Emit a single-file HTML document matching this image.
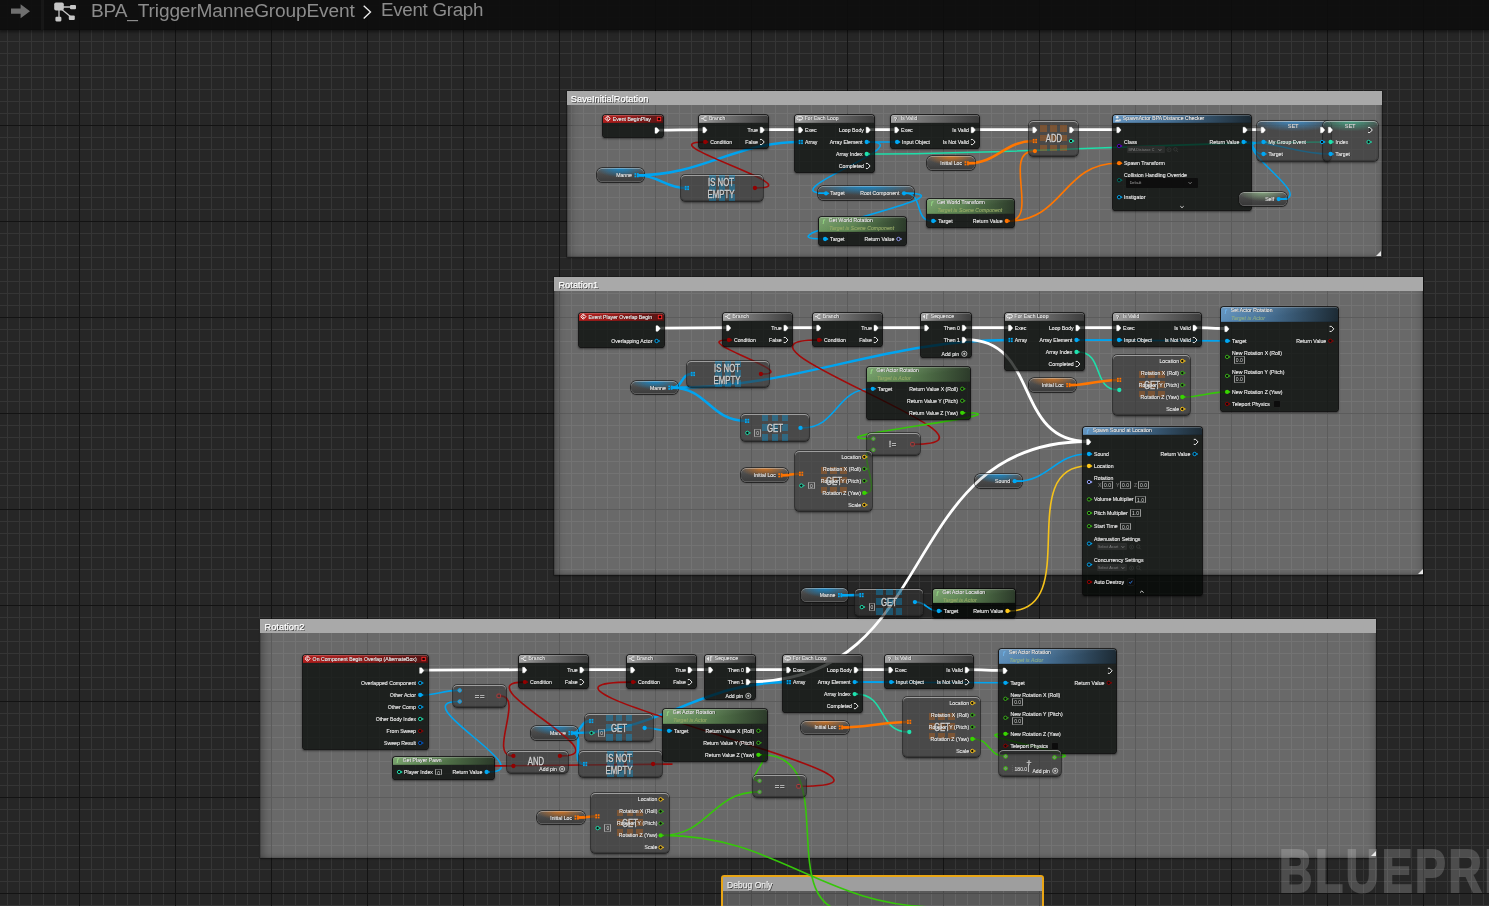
<!DOCTYPE html><html><head><meta charset="utf-8"><title>Event Graph</title><style>

html,body{margin:0;padding:0;background:#262626;}
body{width:1489px;height:906px;overflow:hidden;position:relative;font-family:"Liberation Sans",sans-serif;}
#g{will-change:transform;position:absolute;left:0;top:0;width:1489px;height:906px;overflow:hidden;background-color:#262626;
background-image:
linear-gradient(90deg,#131313 1px,transparent 1px),
linear-gradient(180deg,#131313 1px,transparent 1px),
linear-gradient(90deg,#353535 1px,transparent 1px),
linear-gradient(180deg,#353535 1px,transparent 1px);
background-size:96px 96px,96px 96px,12px 12px,12px 12px;
background-position:79px 0,0 29px,7px 0,0 5px;}
#g>*{position:absolute;}
.cm{box-sizing:border-box;background:rgba(255,255,255,.31);box-shadow:inset 0 0 0 .6px rgba(0,0,0,.25),inset 9px 0 8px -6px rgba(0,0,0,.3),inset -7px 0 7px -6px rgba(0,0,0,.2),inset 0 -5px 5px -4px rgba(0,0,0,.2),0 0 0 .7px rgba(0,0,0,.3),0 1px 2px rgba(0,0,0,.35);}
.cm i{position:absolute;right:.5px;bottom:1.3px;width:0;height:0;border-style:solid;border-width:0 0 5px 5px;border-color:transparent transparent #e4e4e4 transparent}
.cm .ct{position:absolute;left:0;right:0;top:0;height:13.8px;background:#a9a9a9;color:#fff;font-size:9.25px;line-height:16.4px;padding-left:4.1px;text-shadow:.8px .8px 0 rgba(0,0,0,.75);-webkit-text-stroke:.25px;letter-spacing:.03px;white-space:nowrap;overflow:hidden;}
.cm.sel{box-shadow:none;border:2.4px solid #e9a514;border-radius:3.2px;background:rgba(255,255,255,.24);}
.cm.sel .ct{height:14.1px;font-size:9.9px;line-height:15.2px;padding-left:0;color:#ececec;background:#9e9e9e}
.cm.sel .ct span{display:inline-block;transform-origin:0 50%;transform:scaleX(.865);margin-left:4.5px}
.n{box-sizing:border-box;background:rgba(2,5,3,.73);border-radius:2.6px;box-shadow:0 0 0 .8px rgba(5,5,5,.9),0 1.2px 2px .3px rgba(0,0,0,.45);}
.n .h{position:absolute;left:0;right:0;top:0;border-radius:2.6px 2.6px 0 0;box-shadow:inset 0 .7px 0 rgba(255,255,255,.28),inset 0 -0.6px 0 rgba(0,0,0,.25);}
.t{font-size:5.2px;line-height:6px;color:#ececec;white-space:nowrap;transform:translateY(-50%);text-shadow:.45px .45px 0 rgba(0,0,0,.9);-webkit-text-stroke:.14px;}
.ht{color:#ededed;}
.st{color:#94a866;text-shadow:none;font-size:5.1px;font-style:italic;letter-spacing:.08px}
.n+.t{}
.fi{font-style:italic;font-weight:bold;font-family:"Liberation Serif",serif;font-size:5.8px;color:#7fb7e6;text-shadow:none;-webkit-text-stroke:.1px}
.dim{color:#707070;text-shadow:none}
.dim2{color:#d4d4d4;font-size:5px;text-shadow:none}
.pl{box-sizing:border-box;border-radius:5.2px;background:radial-gradient(ellipse 52% 66% at 50% 0%,var(--g) 0%,transparent 100%),linear-gradient(180deg,rgba(92,92,92,.93) 0%,rgba(72,72,72,.93) 45%,rgba(56,56,56,.93) 100%);box-shadow:0 0 0 .8px rgba(20,20,20,.85),inset 0 .8px .3px rgba(235,235,235,.5),inset 0 -0.8px .4px rgba(160,160,160,.45),0 1px 1.5px rgba(0,0,0,.4);}
.cn{box-sizing:border-box;border-radius:4.3px;background:rgba(52,52,52,.6);box-shadow:0 0 0 .8px rgba(25,25,25,.75),inset 0 1px .3px rgba(215,215,215,.6),inset 0 -1px .8px rgba(20,20,20,.35),0 1.2px 2.2px rgba(0,0,0,.45);}
.sn{background:radial-gradient(ellipse 62% 10.5px at 50% 0%,var(--g) 0%,transparent 100%),rgba(52,52,52,.6);}
.setT{font-size:5.4px;color:#e9e9e9}
.big{color:#cfcfcf;text-align:center;text-shadow:.5px .5px 0 rgba(0,0,0,.35);-webkit-text-stroke:.36px;}
.wq{position:absolute}
.dd{box-sizing:border-box;border-radius:1px;overflow:hidden}
.dd span{position:absolute;top:50%;transform:translateY(-50%);font-size:3.7px;line-height:5px;white-space:nowrap}
.nb{box-sizing:border-box;border:.5px solid rgba(200,200,200,.7);border-top-color:rgba(200,200,200,.4);border-bottom-color:rgba(200,200,200,.4);color:#d6d6d6;font-size:5px;text-align:center;white-space:nowrap}
.cb{width:6px;height:6px;background:#0c0c0c;border-radius:.8px;box-shadow:0 0 0 .4px #222}
#wm{left:1278.6px;top:835.7px;font-size:62px;line-height:70px;font-weight:bold;color:#fff;opacity:.18;-webkit-text-stroke:2px #fff;white-space:nowrap;transform-origin:0 0;transform:scaleX(.743);letter-spacing:3.6px}
#top{left:0;top:0;width:1489px;height:29.5px;background:rgba(13,13,13,.92);box-shadow:0 1px 3px 1px rgba(0,0,0,.45);}
#top .bc{position:absolute;top:0;font-size:18.4px;line-height:24px;color:#8c8c8c;white-space:nowrap}
svg{overflow:visible}

</style></head><body><div id="g">
<div class="cm" style="left:566.7px;top:91.2px;width:814.9px;height:166px"><div class="ct">SaveInitialRotation</div><i></i></div>
<div class="cm" style="left:554.3px;top:276.7px;width:869.1px;height:298.6px"><div class="ct" style="height:14.3px">Rotation1</div><i></i></div>
<div class="cm" style="left:260.4px;top:619px;width:1115.8px;height:238.6px"><div class="ct">Rotation2</div><i></i></div>
<div class="cm sel" style="left:720.5px;top:874.6px;width:323.5px;height:55.4px"><div class="ct"><span>Debug Only</span></div></div>
<svg id="wires" width="1489" height="906" style="left:0;top:0" fill="none" stroke-linecap="round"><g id="wg"><path d="M638.1 175.2C703 175.2 734.7 142 799.6 142" stroke="#00a4f0" stroke-width="2.5"/>
<path d="M638.1 175.2C658.23 175.2 665.57 188 685.7 188" stroke="#00a4f0" stroke-width="2.5"/>
<path d="M756.3 188C814.17 188 646.13 142 704 142" stroke="#a30a0a" stroke-width="1.6"/>
<path d="M868.3 142C877.5 142 886.7 142 895.9 142" stroke="#00a4f0" stroke-width="1.6"/>
<path d="M868.3 142C922.95 142 770.15 193.3 824.8 193.3" stroke="#00a4f0" stroke-width="1.6"/>
<path d="M868.3 154C1026 154 1171.7 142 1329.4 142" stroke="#1edea9" stroke-width="1.6"/>
<path d="M968.2 163.25C997.42 163.25 1004.38 141 1033.6 141" stroke="#ff7600" stroke-width="2.5"/>
<path d="M1008.4 221C1040.17 221 1002.03 151.1 1033.8 151.1" stroke="#ff7600" stroke-width="1.6"/>
<path d="M1008.4 221C1064.17 221 1062.13 163.2 1117.9 163.2" stroke="#ff7600" stroke-width="1.6"/>
<path d="M905.6 193.3C982.92 193.3 746.58 239 823.9 239" stroke="#00a4f0" stroke-width="1.6"/>
<path d="M905.6 193.3C923.63 193.3 913.97 221 932 221" stroke="#00a4f0" stroke-width="1.6"/>
<path d="M1245.2 142C1254.9 142 1252.6 154 1262.3 154" stroke="#00a4f0" stroke-width="1.6"/>
<path d="M1245.2 142C1277.27 142 1297.33 154 1329.4 154" stroke="#00a4f0" stroke-width="1.6"/>
<path d="M1280.2 199.1C1320.68 199.1 1221.82 142 1262.3 142" stroke="#00a4f0" stroke-width="1.6"/>
<path d="M671.9 387.7C683.07 387.7 680.53 374 691.7 374" stroke="#00a4f0" stroke-width="2.5"/>
<path d="M671.9 387.7C707.6 387.7 710.1 420.9 745.8 420.9" stroke="#00a4f0" stroke-width="2.5"/>
<path d="M671.9 387.7C800.3 387.7 881 340 1009.4 340" stroke="#00a4f0" stroke-width="2.5"/>
<path d="M762.3 374C802.37 374 687.63 340 727.7 340" stroke="#a30a0a" stroke-width="1.6"/>
<path d="M801.9 427.9C838.17 427.9 835.33 388.8 871.6 388.8" stroke="#00a4f0" stroke-width="1.6"/>
<path d="M914.1 444.2C1030.4 444.2 701.5 340 817.8 340" stroke="#a30a0a" stroke-width="1.6"/>
<path d="M963.8 412.8C1037.88 412.8 798.02 438.7 872.1 438.7" stroke="#36c60a" stroke-width="1.6"/>
<path d="M865.9 492.9C882.33 492.9 855.67 449.8 872.1 449.8" stroke="#36c60a" stroke-width="1.6"/>
<path d="M781.9 475.3C788.37 475.3 793.33 473.8 799.8 473.8" stroke="#ff7600" stroke-width="2.5"/>
<path d="M1078.1 340C1091.33 340 1104.57 340 1117.8 340" stroke="#00a4f0" stroke-width="1.6"/>
<path d="M1078.1 340C1127.67 340 1176.33 340.9 1225.9 340.9" stroke="#00a4f0" stroke-width="1.6"/>
<path d="M1078.1 352C1104.1 352 1092.1 390 1118.1 390" stroke="#1edea9" stroke-width="1.6"/>
<path d="M1069.8 385.05C1087.52 385.05 1100.08 379.9 1117.8 379.9" stroke="#ff7600" stroke-width="2.5"/>
<path d="M1183.9 397C1199.6 397 1210.2 391.9 1225.9 391.9" stroke="#36c60a" stroke-width="1.6"/>
<path d="M1016.2 481.15C1049.12 481.15 1054.88 454 1087.8 454" stroke="#00a4f0" stroke-width="1.6"/>
<path d="M1009 611C1083.6 611 1013.2 466 1087.8 466" stroke="#f5c21b" stroke-width="1.6"/>
<path d="M841.6 595.15C847.82 595.15 853.98 595.1 860.2 595.1" stroke="#00a4f0" stroke-width="2.5"/>
<path d="M916.3 602.1C926.37 602.1 927.53 611 937.6 611" stroke="#00a4f0" stroke-width="1.6"/>
<path d="M421.8 695C435.53 695 444.67 690.4 458.4 690.4" stroke="#00a4f0" stroke-width="1.6"/>
<path d="M488.2 772C543.32 772 403.28 701.5 458.4 701.5" stroke="#00a4f0" stroke-width="1.6"/>
<path d="M500.4 695.9C524.33 695.9 488.27 755.9 512.2 755.9" stroke="#a30a0a" stroke-width="1.6"/>
<path d="M561.4 755.9C623.43 755.9 461.67 682.1 523.7 682.1" stroke="#a30a0a" stroke-width="1.6"/>
<path d="M654.5 764C750.37 764 416.33 766 512.2 766" stroke="#a30a0a" stroke-width="1.6"/>
<path d="M572 733.05C581.98 733.05 579.92 721 589.9 721" stroke="#00a4f0" stroke-width="2.5"/>
<path d="M572 733.05C586.28 733.05 569.62 764 583.9 764" stroke="#00a4f0" stroke-width="2.5"/>
<path d="M572 733.05C660.85 733.05 698.75 682.1 787.6 682.1" stroke="#00a4f0" stroke-width="2.5"/>
<path d="M646 728C654.2 728 659.6 730.8 667.8 730.8" stroke="#00a4f0" stroke-width="1.6"/>
<path d="M760 754.8C774.2 754.8 744 780.8 758.2 780.8" stroke="#36c60a" stroke-width="1.6"/>
<path d="M662.2 835.4C708.7 835.4 711.7 791.9 758.2 791.9" stroke="#36c60a" stroke-width="1.6"/>
<path d="M800.2 786.3C964.57 786.3 467.43 682.1 631.8 682.1" stroke="#a30a0a" stroke-width="1.6"/>
<path d="M578.2 817.5C584.57 817.5 589.73 816.3 596.1 816.3" stroke="#ff7600" stroke-width="2.5"/>
<path d="M856.3 682.1C867.5 682.1 878.7 682.1 889.9 682.1" stroke="#00a4f0" stroke-width="1.6"/>
<path d="M856.3 682.1C905.83 682.1 954.67 682.8 1004.2 682.8" stroke="#00a4f0" stroke-width="1.6"/>
<path d="M856.3 694.1C886.2 694.1 878.2 732 908.1 732" stroke="#1edea9" stroke-width="1.6"/>
<path d="M842.4 727.4C866.03 727.4 884.17 721.9 907.8 721.9" stroke="#ff7600" stroke-width="2.5"/>
<path d="M973.9 739C989.87 739 988.63 756.2 1004.6 756.2" stroke="#36c60a" stroke-width="1.6"/>
<path d="M1056 757.2C1102.23 757.2 957.97 733.8 1004.2 733.8" stroke="#36c60a" stroke-width="1.6"/>
<path d="M762.1 754.8C844.77 754.8 770.03 912.2 852.7 912.2" stroke="#36c60a" stroke-width="1.6"/>
<path d="M663 835.4C778.83 835.4 822.97 907.1 938.8 907.1" stroke="#36c60a" stroke-width="1.6"/>
<path d="M658.7 130.1C673.9 130.1 688.6 129.6 703.8 129.6" stroke="#fff" stroke-width="2.8"/>
<path d="M763.9 129.6C775.8 129.6 787.7 129.6 799.6 129.6" stroke="#fff" stroke-width="2.8"/>
<path d="M869.8 129.6C878.43 129.6 887.07 129.6 895.7 129.6" stroke="#fff" stroke-width="2.8"/>
<path d="M974.8 129.6C994.4 129.6 1014 129.6 1033.6 129.6" stroke="#fff" stroke-width="2.8"/>
<path d="M1073.2 129.6C1088.03 129.6 1102.87 129.6 1117.7 129.6" stroke="#fff" stroke-width="2.8"/>
<path d="M1246.7 129.6C1251.83 129.6 1256.97 129.6 1262.1 129.6" stroke="#fff" stroke-width="2.8"/>
<path d="M659.7 328.1C682.47 328.1 704.73 327.6 727.5 327.6" stroke="#fff" stroke-width="2.8"/>
<path d="M787.6 327.6C797.6 327.6 807.6 327.6 817.6 327.6" stroke="#fff" stroke-width="2.8"/>
<path d="M877.7 327.6C893.67 327.6 909.63 327.6 925.6 327.6" stroke="#fff" stroke-width="2.8"/>
<path d="M965.9 327.6C980.4 327.6 994.9 327.6 1009.4 327.6" stroke="#fff" stroke-width="2.8"/>
<path d="M965.9 339.6C1040.43 339.6 1013.07 441.5 1087.6 441.5" stroke="#fff" stroke-width="2.8"/>
<path d="M1079.6 327.6C1092.27 327.6 1104.93 327.6 1117.6 327.6" stroke="#fff" stroke-width="2.8"/>
<path d="M1196.7 327.6C1206.67 327.6 1215.73 328.5 1225.7 328.5" stroke="#fff" stroke-width="2.8"/>
<path d="M423.3 670.2C456.87 670.2 489.93 669.7 523.5 669.7" stroke="#fff" stroke-width="2.8"/>
<path d="M583.6 669.7C599.6 669.7 615.6 669.7 631.6 669.7" stroke="#fff" stroke-width="2.8"/>
<path d="M691.7 669.7C697.67 669.7 703.63 669.7 709.6 669.7" stroke="#fff" stroke-width="2.8"/>
<path d="M749.9 669.7C762.47 669.7 775.03 669.7 787.6 669.7" stroke="#fff" stroke-width="2.8"/>
<path d="M749.9 681.7C942.53 681.7 894.97 441.5 1087.6 441.5" stroke="#fff" stroke-width="2.8"/>
<path d="M857.8 669.7C868.43 669.7 879.07 669.7 889.7 669.7" stroke="#fff" stroke-width="2.8"/>
<path d="M968.8 669.7C980.77 669.7 992.03 670.4 1004 670.4" stroke="#fff" stroke-width="2.8"/></g></svg>
<div class="n" style="left:603px;top:114.8px;width:60.2px;height:22.1px"><div class="h" style="height:8.3px;background:linear-gradient(90deg,#b3201f 0%,#9a1c1b 40%,#531514 100%)"></div></div>
<div class="t ht" style="top:119px;left:612.8px;">Event BeginPlay</div>
<div class="n" style="left:699.1px;top:114.8px;width:69.3px;height:33px"><div class="h" style="height:8.3px;background:linear-gradient(90deg,#a2a2a2 0%,#7a7a7a 30%,#3d3d3d 100%)"></div></div>
<div class="t ht" style="top:118.1px;left:708.9px;">Branch</div>
<div class="t " style="top:142px;left:710.2px;">Condition</div>
<div class="t " style="top:130px;right:731px;">True</div>
<div class="t " style="top:142px;right:731px;">False</div>
<div class="n" style="left:794.9px;top:114.8px;width:79.4px;height:57.1px"><div class="h" style="height:8.3px;background:linear-gradient(90deg,#a2a2a2 0%,#7a7a7a 30%,#3d3d3d 100%)"></div></div>
<div class="t ht" style="top:118.1px;left:804.7px;">For Each Loop</div>
<div class="t " style="top:130px;left:805px;">Exec</div>
<div class="t " style="top:142px;left:805px;">Array</div>
<div class="t " style="top:130px;right:625.1px;">Loop Body</div>
<div class="t " style="top:142px;right:626.5px;">Array Element</div>
<div class="t " style="top:154px;right:626.5px;">Array Index</div>
<div class="t " style="top:166px;right:625.1px;">Completed</div>
<div class="n" style="left:891px;top:114.8px;width:88.3px;height:33px"><div class="h" style="height:8.3px;background:linear-gradient(90deg,#a2a2a2 0%,#7a7a7a 30%,#3d3d3d 100%)"></div></div>
<div class="t ht" style="top:118.1px;left:900.8px;">Is Valid</div>
<div class="t ht" style="top:118.6px;left:894.1px;font-weight:bold;">?</div>
<div class="t " style="top:130px;left:901.1px;">Exec</div>
<div class="t " style="top:142px;left:902.1px;">Input Object</div>
<div class="t " style="top:130px;right:520.1px;">Is Valid</div>
<div class="t " style="top:142px;right:520.1px;">Is Not Valid</div>
<div class="cn" style="left:1028.9px;top:120.5px;width:49.2px;height:35.9px"></div>
<div class="wq" style="left:1040.45px;top:125px;width:6.5px;height:6.5px;background:#ff7300;opacity:0.27"></div><div class="wq" style="left:1040.45px;top:134.8px;width:6.5px;height:6.5px;background:#ff7300;opacity:0.27"></div><div class="wq" style="left:1040.45px;top:144.6px;width:6.5px;height:6.5px;background:#ff7300;opacity:0.27"></div><div class="wq" style="left:1050.25px;top:125px;width:6.5px;height:6.5px;background:#ff7300;opacity:0.27"></div><div class="wq" style="left:1050.25px;top:134.8px;width:6.5px;height:6.5px;background:#ff7300;opacity:0.27"></div><div class="wq" style="left:1050.25px;top:144.6px;width:6.5px;height:6.5px;background:#ff7300;opacity:0.27"></div><div class="wq" style="left:1060.05px;top:125px;width:6.5px;height:6.5px;background:#ff7300;opacity:0.27"></div><div class="wq" style="left:1060.05px;top:134.8px;width:6.5px;height:6.5px;background:#ff7300;opacity:0.27"></div><div class="wq" style="left:1060.05px;top:144.6px;width:6.5px;height:6.5px;background:#ff7300;opacity:0.27"></div>
<div class="t big" style="top:138.45px;left:1053.5px;transform:translate(-50%,-50%);font-size:10.8px;line-height:12px;transform:translate(-50%,-50%) scaleX(0.72);">ADD</div>
<div class="n" style="left:1113px;top:114.8px;width:138.2px;height:95.2px"><div class="h" style="height:8.3px;background:linear-gradient(172deg,rgba(255,255,255,.1) 0%,rgba(255,255,255,0) 55%),linear-gradient(100deg,#5a8dba 0%,#477196 40%,#1c2932 100%)"></div></div>
<div class="t ht" style="top:118.1px;left:1122.8px;">SpawnActor BPA Distance Checker</div>
<div class="t " style="top:142px;left:1124.1px;">Class</div>
<div class="dd" style="left:1127.2px;top:146.2px;width:37.5px;height:7.3px;background:#2b2d2c"><span style="left:1.2px;color:#828282">BPA Distance C</span></div>
<div class="t " style="top:163.2px;left:1124.1px;">Spawn Transform</div>
<div class="t " style="top:175px;left:1124.1px;">Collision Handling Override</div>
<div class="dd" style="left:1125.9px;top:178px;width:72px;height:9.6px;background:#0e0e0e"><span style="left:3.8px;color:#a4a4a4">Default</span></div>
<div class="t " style="top:197.2px;left:1124.1px;">Instigator</div>
<div class="t " style="top:142px;right:249.6px;">Return Value</div>
<div class="cn sn" style="left:1256.8px;top:120.5px;width:74px;height:40.1px;--g:rgba(60,160,235,.75)"></div>
<div class="t setT" style="top:126px;left:1293.3px;transform:translate(-50%,-50%);">SET</div>
<div class="cn sn" style="left:1322.8px;top:120.5px;width:55.5px;height:40.1px;--g:rgba(70,225,175,.6)"></div>
<div class="t setT" style="top:126px;left:1350.3px;transform:translate(-50%,-50%);">SET</div>
<div class="t " style="top:142px;left:1268.5px;">My Group Event</div>
<div class="t " style="top:154px;left:1268.5px;">Target</div>
<div class="t " style="top:142px;left:1335.6px;">Index</div>
<div class="t " style="top:154px;left:1335.6px;">Target</div>
<div class="pl" style="left:596.6px;top:168.3px;width:47.8px;height:13.6px;--g:rgba(0,150,235,.75)"></div>
<div class="t " style="top:175.2px;right:857px;">Manne</div>
<div class="pl" style="left:927px;top:156.3px;width:47.5px;height:13.7px;--g:rgba(255,125,10,.7)"></div>
<div class="t " style="top:163.25px;right:526.9px;">Initial Loc</div>
<div class="pl" style="left:1238.5px;top:192.3px;width:48px;height:13.4px;--g:rgba(160,215,150,.6)"></div>
<div class="t " style="top:199.1px;right:214.9px;">Self</div>
<div class="cn" style="left:680.8px;top:174.6px;width:82.5px;height:26.8px"></div>
<div class="wq" style="left:709px;top:175px;width:6.5px;height:6.05px;background:#00a8f4;opacity:0.33"></div><div class="wq" style="left:709px;top:184.35px;width:6.5px;height:6.5px;background:#00a8f4;opacity:0.33"></div><div class="wq" style="left:709px;top:194.15px;width:6.5px;height:6.5px;background:#00a8f4;opacity:0.33"></div><div class="wq" style="left:718.8px;top:175px;width:6.5px;height:6.05px;background:#00a8f4;opacity:0.33"></div><div class="wq" style="left:718.8px;top:184.35px;width:6.5px;height:6.5px;background:#00a8f4;opacity:0.33"></div><div class="wq" style="left:718.8px;top:194.15px;width:6.5px;height:6.5px;background:#00a8f4;opacity:0.33"></div><div class="wq" style="left:728.6px;top:175px;width:6.5px;height:6.05px;background:#00a8f4;opacity:0.33"></div><div class="wq" style="left:728.6px;top:184.35px;width:6.5px;height:6.5px;background:#00a8f4;opacity:0.33"></div><div class="wq" style="left:728.6px;top:194.15px;width:6.5px;height:6.5px;background:#00a8f4;opacity:0.33"></div>
<div class="t big" style="top:188px;left:720.85px;transform:translate(-50%,-50%);font-size:10.8px;line-height:12px;transform:translate(-50%,-50%) scaleX(0.72);">IS NOT<br>EMPTY</div>
<div class="pl" style="left:818.4px;top:186.4px;width:95.2px;height:14.1px;--g:rgba(0,150,235,.75)"></div>
<div class="t " style="top:193.3px;left:830.3px;">Target</div>
<div class="t " style="top:193.3px;right:589.6px;">Root Component</div>
<div class="n" style="left:819px;top:216.8px;width:87.1px;height:27.9px"><div class="h" style="height:14.8px;background:linear-gradient(172deg,rgba(255,255,255,.13) 0%,rgba(255,255,255,0) 55%),linear-gradient(100deg,#6c9760 0%,#5b8151 40%,#2b3929 100%)"></div></div>
<div class="t ht" style="top:220.1px;left:828.8px;">Get World Rotation</div>
<div class="t st" style="top:228.2px;left:829.3px;">Target is Scene Component</div>
<div class="t fi" style="top:220.6px;left:822.8px;color:#95d884;">f</div>
<div class="t " style="top:239px;left:830.1px;">Target</div>
<div class="t " style="top:239px;right:594.7px;">Return Value</div>
<div class="n" style="left:927.1px;top:198.9px;width:87.3px;height:27.9px"><div class="h" style="height:14.8px;background:linear-gradient(172deg,rgba(255,255,255,.13) 0%,rgba(255,255,255,0) 55%),linear-gradient(100deg,#6c9760 0%,#5b8151 40%,#2b3929 100%)"></div></div>
<div class="t ht" style="top:202.2px;left:936.9px;">Get World Transform</div>
<div class="t st" style="top:210.3px;left:937.4px;">Target is Scene Component</div>
<div class="t fi" style="top:202.7px;left:930.9px;color:#95d884;">f</div>
<div class="t " style="top:221px;left:938.2px;">Target</div>
<div class="t " style="top:221px;right:486.4px;">Return Value</div>
<div class="n" style="left:578.6px;top:312.8px;width:85.6px;height:34.4px"><div class="h" style="height:8.3px;background:linear-gradient(90deg,#b3201f 0%,#9a1c1b 40%,#531514 100%)"></div></div>
<div class="t ht" style="top:317px;left:588.4px;">Event Player Overlap Begin</div>
<div class="t " style="top:341px;right:836.6px;">Overlapping Actor</div>
<div class="n" style="left:722.8px;top:312.8px;width:69.3px;height:33px"><div class="h" style="height:8.3px;background:linear-gradient(90deg,#a2a2a2 0%,#7a7a7a 30%,#3d3d3d 100%)"></div></div>
<div class="t ht" style="top:316.1px;left:732.6px;">Branch</div>
<div class="t " style="top:340px;left:733.9px;">Condition</div>
<div class="t " style="top:328px;right:707.3px;">True</div>
<div class="t " style="top:340px;right:707.3px;">False</div>
<div class="n" style="left:812.9px;top:312.8px;width:69.3px;height:33px"><div class="h" style="height:8.3px;background:linear-gradient(90deg,#a2a2a2 0%,#7a7a7a 30%,#3d3d3d 100%)"></div></div>
<div class="t ht" style="top:316.1px;left:822.7px;">Branch</div>
<div class="t " style="top:340px;left:824px;">Condition</div>
<div class="t " style="top:328px;right:617.2px;">True</div>
<div class="t " style="top:340px;right:617.2px;">False</div>
<div class="n" style="left:920.9px;top:312.8px;width:50px;height:44.2px"><div class="h" style="height:8.3px;background:linear-gradient(90deg,#a2a2a2 0%,#7a7a7a 30%,#3d3d3d 100%)"></div></div>
<div class="t ht" style="top:316.1px;left:930.7px;">Sequence</div>
<div class="t " style="top:328px;right:529px;">Then 0</div>
<div class="t " style="top:340px;right:529px;">Then 1</div>
<div class="t " style="top:353.8px;right:529.9px;">Add pin</div>
<div class="n" style="left:1004.7px;top:312.8px;width:79.4px;height:57.1px"><div class="h" style="height:8.3px;background:linear-gradient(90deg,#a2a2a2 0%,#7a7a7a 30%,#3d3d3d 100%)"></div></div>
<div class="t ht" style="top:316.1px;left:1014.5px;">For Each Loop</div>
<div class="t " style="top:328px;left:1014.8px;">Exec</div>
<div class="t " style="top:340px;left:1014.8px;">Array</div>
<div class="t " style="top:328px;right:415.3px;">Loop Body</div>
<div class="t " style="top:340px;right:416.7px;">Array Element</div>
<div class="t " style="top:352px;right:416.7px;">Array Index</div>
<div class="t " style="top:364px;right:415.3px;">Completed</div>
<div class="n" style="left:1112.9px;top:312.8px;width:88.3px;height:33px"><div class="h" style="height:8.3px;background:linear-gradient(90deg,#a2a2a2 0%,#7a7a7a 30%,#3d3d3d 100%)"></div></div>
<div class="t ht" style="top:316.1px;left:1122.7px;">Is Valid</div>
<div class="t ht" style="top:316.6px;left:1116px;font-weight:bold;">?</div>
<div class="t " style="top:328px;left:1123px;">Exec</div>
<div class="t " style="top:340px;left:1124px;">Input Object</div>
<div class="t " style="top:328px;right:298.2px;">Is Valid</div>
<div class="t " style="top:340px;right:298.2px;">Is Not Valid</div>
<div class="n" style="left:1221px;top:306.9px;width:117px;height:104.1px"><div class="h" style="height:14.8px;background:linear-gradient(172deg,rgba(255,255,255,.1) 0%,rgba(255,255,255,0) 55%),linear-gradient(100deg,#5a8dba 0%,#477196 40%,#1c2932 100%)"></div></div>
<div class="t ht" style="top:310.2px;left:1230.8px;">Set Actor Rotation</div>
<div class="t st" style="top:318.3px;left:1231.3px;color:#8bab88;">Target is Actor</div>
<div class="t fi" style="top:310.7px;left:1224.8px;color:#6eb4ec;">f</div>
<div class="t " style="top:340.9px;left:1232.1px;">Target</div>
<div class="t " style="top:353px;left:1232.1px;">New Rotation X (Roll)</div>
<div class="nb" style="left:1233.9px;top:356.3px;width:10.9px;height:7.6px;line-height:7px;">0.0</div>
<div class="t " style="top:372px;left:1232.1px;">New Rotation Y (Pitch)</div>
<div class="nb" style="left:1233.9px;top:375.4px;width:10.9px;height:7.6px;line-height:7px;">0.0</div>
<div class="t " style="top:391.9px;left:1232.1px;">New Rotation Z (Yaw)</div>
<div class="t " style="top:403.9px;left:1232.1px;">Teleport Physics</div>
<div class="cb" style="left:1273.6px;top:400.9px"></div>
<div class="t " style="top:340.9px;right:162.8px;">Return Value</div>
<div class="cn" style="left:686.8px;top:360.6px;width:82.5px;height:26.8px"></div>
<div class="wq" style="left:715px;top:361px;width:6.5px;height:6.05px;background:#00a8f4;opacity:0.33"></div><div class="wq" style="left:715px;top:370.35px;width:6.5px;height:6.5px;background:#00a8f4;opacity:0.33"></div><div class="wq" style="left:715px;top:380.15px;width:6.5px;height:6.5px;background:#00a8f4;opacity:0.33"></div><div class="wq" style="left:724.8px;top:361px;width:6.5px;height:6.05px;background:#00a8f4;opacity:0.33"></div><div class="wq" style="left:724.8px;top:370.35px;width:6.5px;height:6.5px;background:#00a8f4;opacity:0.33"></div><div class="wq" style="left:724.8px;top:380.15px;width:6.5px;height:6.5px;background:#00a8f4;opacity:0.33"></div><div class="wq" style="left:734.6px;top:361px;width:6.5px;height:6.05px;background:#00a8f4;opacity:0.33"></div><div class="wq" style="left:734.6px;top:370.35px;width:6.5px;height:6.5px;background:#00a8f4;opacity:0.33"></div><div class="wq" style="left:734.6px;top:380.15px;width:6.5px;height:6.5px;background:#00a8f4;opacity:0.33"></div>
<div class="t big" style="top:374px;left:726.85px;transform:translate(-50%,-50%);font-size:10.8px;line-height:12px;transform:translate(-50%,-50%) scaleX(0.72);">IS NOT<br>EMPTY</div>
<div class="pl" style="left:630.5px;top:380.7px;width:47.7px;height:13.8px;--g:rgba(0,150,235,.75)"></div>
<div class="t " style="top:387.7px;right:823.2px;">Manne</div>
<div class="cn" style="left:740.8px;top:414.3px;width:68.3px;height:27.1px"></div>
<div class="wq" style="left:761.9px;top:414.7px;width:6.5px;height:6.2px;background:#00a8f4;opacity:0.33"></div><div class="wq" style="left:761.9px;top:424.2px;width:6.5px;height:6.5px;background:#00a8f4;opacity:0.33"></div><div class="wq" style="left:761.9px;top:434px;width:6.5px;height:6.5px;background:#00a8f4;opacity:0.33"></div><div class="wq" style="left:771.7px;top:414.7px;width:6.5px;height:6.2px;background:#00a8f4;opacity:0.33"></div><div class="wq" style="left:771.7px;top:424.2px;width:6.5px;height:6.5px;background:#00a8f4;opacity:0.33"></div><div class="wq" style="left:771.7px;top:434px;width:6.5px;height:6.5px;background:#00a8f4;opacity:0.33"></div><div class="wq" style="left:781.5px;top:414.7px;width:6.5px;height:6.2px;background:#00a8f4;opacity:0.33"></div><div class="wq" style="left:781.5px;top:424.2px;width:6.5px;height:6.5px;background:#00a8f4;opacity:0.33"></div><div class="wq" style="left:781.5px;top:434px;width:6.5px;height:6.5px;background:#00a8f4;opacity:0.33"></div>
<div class="t big" style="top:427.85px;left:774.95px;transform:translate(-50%,-50%);font-size:10.8px;line-height:12px;transform:translate(-50%,-50%) scaleX(0.72);">GET</div>
<div class="nb" style="left:754.2px;top:429.1px;width:6.8px;height:7.8px;line-height:7.2px;">0</div>
<div class="n" style="left:866.7px;top:367px;width:103.7px;height:52.1px"><div class="h" style="height:14.8px;background:linear-gradient(172deg,rgba(255,255,255,.13) 0%,rgba(255,255,255,0) 55%),linear-gradient(100deg,#6c9760 0%,#5b8151 40%,#2b3929 100%)"></div></div>
<div class="t ht" style="top:370.3px;left:876.5px;">Get Actor Rotation</div>
<div class="t st" style="top:378.4px;left:877px;">Target is Actor</div>
<div class="t fi" style="top:370.8px;left:870.5px;color:#95d884;">f</div>
<div class="t " style="top:388.8px;left:877.8px;">Target</div>
<div class="t " style="top:388.8px;right:531px;">Return Value X (Roll)</div>
<div class="t " style="top:400.8px;right:531px;">Return Value Y (Pitch)</div>
<div class="t " style="top:412.8px;right:531px;">Return Value Z (Yaw)</div>
<div class="pl" style="left:1028.9px;top:378.1px;width:47.2px;height:13.7px;--g:rgba(255,125,10,.7)"></div>
<div class="t " style="top:385.05px;right:425.3px;">Initial Loc</div>
<div class="cn" style="left:1112.9px;top:354.6px;width:77.4px;height:60.1px"></div>
<div class="wq" style="left:1138.55px;top:371.2px;width:6.5px;height:6.5px;background:#ff7300;opacity:0.27"></div><div class="wq" style="left:1138.55px;top:381px;width:6.5px;height:6.5px;background:#ff7300;opacity:0.27"></div><div class="wq" style="left:1138.55px;top:390.8px;width:6.5px;height:6.5px;background:#ff7300;opacity:0.27"></div><div class="wq" style="left:1148.35px;top:371.2px;width:6.5px;height:6.5px;background:#ff7300;opacity:0.27"></div><div class="wq" style="left:1148.35px;top:381px;width:6.5px;height:6.5px;background:#ff7300;opacity:0.27"></div><div class="wq" style="left:1148.35px;top:390.8px;width:6.5px;height:6.5px;background:#ff7300;opacity:0.27"></div><div class="wq" style="left:1158.15px;top:371.2px;width:6.5px;height:6.5px;background:#ff7300;opacity:0.27"></div><div class="wq" style="left:1158.15px;top:381px;width:6.5px;height:6.5px;background:#ff7300;opacity:0.27"></div><div class="wq" style="left:1158.15px;top:390.8px;width:6.5px;height:6.5px;background:#ff7300;opacity:0.27"></div>
<div class="t big" style="top:384.65px;left:1151.6px;transform:translate(-50%,-50%);font-size:10.8px;line-height:12px;transform:translate(-50%,-50%) scaleX(0.72);">GET</div>
<div class="t " style="top:361px;right:309.9px;">Location</div>
<div class="t " style="top:373px;right:309.9px;">Rotation X (Roll)</div>
<div class="t " style="top:385px;right:309.9px;">Rotation Y (Pitch)</div>
<div class="t " style="top:397px;right:309.9px;">Rotation Z (Yaw)</div>
<div class="t " style="top:409px;right:309.9px;">Scale</div>
<div class="cn" style="left:866.7px;top:432.8px;width:53.4px;height:22.6px"></div>
<div class="t big" style="top:444.1px;left:893.4px;transform:translate(-50%,-50%);font-size:8.5px;line-height:12px;transform:translate(-50%,-50%) scaleX(0.9);"><span style="letter-spacing:.9px">!=</span></div>
<div class="cn" style="left:794.9px;top:450.5px;width:77.4px;height:60.1px"></div>
<div class="wq" style="left:820.55px;top:467.1px;width:6.5px;height:6.5px;background:#ff7300;opacity:0.27"></div><div class="wq" style="left:820.55px;top:476.9px;width:6.5px;height:6.5px;background:#ff7300;opacity:0.27"></div><div class="wq" style="left:820.55px;top:486.7px;width:6.5px;height:6.5px;background:#ff7300;opacity:0.27"></div><div class="wq" style="left:830.35px;top:467.1px;width:6.5px;height:6.5px;background:#ff7300;opacity:0.27"></div><div class="wq" style="left:830.35px;top:476.9px;width:6.5px;height:6.5px;background:#ff7300;opacity:0.27"></div><div class="wq" style="left:830.35px;top:486.7px;width:6.5px;height:6.5px;background:#ff7300;opacity:0.27"></div><div class="wq" style="left:840.15px;top:467.1px;width:6.5px;height:6.5px;background:#ff7300;opacity:0.27"></div><div class="wq" style="left:840.15px;top:476.9px;width:6.5px;height:6.5px;background:#ff7300;opacity:0.27"></div><div class="wq" style="left:840.15px;top:486.7px;width:6.5px;height:6.5px;background:#ff7300;opacity:0.27"></div>
<div class="t big" style="top:480.55px;left:833.6px;transform:translate(-50%,-50%);font-size:10.8px;line-height:12px;transform:translate(-50%,-50%) scaleX(0.72);">GET</div>
<div class="nb" style="left:808.1px;top:481.7px;width:6.8px;height:7.8px;line-height:7.2px;">0</div>
<div class="t " style="top:456.9px;right:627.9px;">Location</div>
<div class="t " style="top:468.9px;right:627.9px;">Rotation X (Roll)</div>
<div class="t " style="top:480.9px;right:627.9px;">Rotation Y (Pitch)</div>
<div class="t " style="top:492.9px;right:627.9px;">Rotation Z (Yaw)</div>
<div class="t " style="top:504.9px;right:627.9px;">Scale</div>
<div class="pl" style="left:740.8px;top:468.3px;width:47.4px;height:13.8px;--g:rgba(255,125,10,.7)"></div>
<div class="t " style="top:475.3px;right:713.2px;">Initial Loc</div>
<div class="pl" style="left:974.6px;top:474.2px;width:47.9px;height:13.7px;--g:rgba(0,150,235,.75)"></div>
<div class="t " style="top:481.15px;right:478.9px;">Sound</div>
<div class="n" style="left:1082.9px;top:426.8px;width:119.3px;height:168.3px"><div class="h" style="height:8.3px;background:linear-gradient(172deg,rgba(255,255,255,.1) 0%,rgba(255,255,255,0) 55%),linear-gradient(100deg,#5a8dba 0%,#477196 40%,#1c2932 100%)"></div></div>
<div class="t ht" style="top:430.1px;left:1092.7px;">Spawn Sound at Location</div>
<div class="t fi" style="top:430.6px;left:1086.7px;color:#6eb4ec;">f</div>
<div class="t " style="top:454px;left:1094px;">Sound</div>
<div class="t " style="top:466px;left:1094px;">Location</div>
<div class="t " style="top:478px;left:1094px;">Rotation</div>
<div class="t dim" style="top:485.2px;left:1097.9px;">X</div>
<div class="nb" style="left:1102.1px;top:481.3px;width:10.9px;height:7.6px;line-height:7px;">0.0</div>
<div class="t dim" style="top:485.2px;left:1115.9px;">Y</div>
<div class="nb" style="left:1120.1px;top:481.3px;width:10.9px;height:7.6px;line-height:7px;">0.0</div>
<div class="t dim" style="top:485.2px;left:1133.9px;">Z</div>
<div class="nb" style="left:1138.1px;top:481.3px;width:10.9px;height:7.6px;line-height:7px;">0.0</div>
<div class="t " style="top:499.4px;left:1094px;">Volume Multiplier</div>
<div class="nb" style="left:1135px;top:495.6px;width:10.9px;height:7.6px;line-height:7px;">1.0</div>
<div class="t " style="top:513px;left:1094px;">Pitch Multiplier</div>
<div class="nb" style="left:1130.1px;top:509.3px;width:10.9px;height:7.6px;line-height:7px;">1.0</div>
<div class="t " style="top:526.2px;left:1094px;">Start Time</div>
<div class="nb" style="left:1120.1px;top:522.6px;width:10.9px;height:7.6px;line-height:7px;">0.0</div>
<div class="t " style="top:539.2px;left:1094px;">Attenuation Settings</div>
<div class="dd" style="left:1096.9px;top:543.2px;width:30px;height:7.3px;background:#2b2d2c"><span style="left:1.2px;color:#828282">Select Asset</span></div>
<div class="t " style="top:560.2px;left:1094px;">Concurrency Settings</div>
<div class="dd" style="left:1096.9px;top:564.2px;width:30px;height:7.3px;background:#2b2d2c"><span style="left:1.2px;color:#828282">Select Asset</span></div>
<div class="t " style="top:582px;left:1094px;">Auto Destroy</div>
<div class="cb" style="left:1127.6px;top:579px"></div>
<div class="t " style="top:454px;right:298.6px;">Return Value</div>
<div class="pl" style="left:800.9px;top:588.3px;width:47px;height:13.5px;--g:rgba(0,150,235,.75)"></div>
<div class="t " style="top:595.15px;right:653.5px;">Manne</div>
<div class="cn" style="left:855.2px;top:588.5px;width:68.3px;height:27.1px"></div>
<div class="wq" style="left:876.3px;top:588.9px;width:6.5px;height:6.2px;background:#00a8f4;opacity:0.33"></div><div class="wq" style="left:876.3px;top:598.4px;width:6.5px;height:6.5px;background:#00a8f4;opacity:0.33"></div><div class="wq" style="left:876.3px;top:608.2px;width:6.5px;height:6.5px;background:#00a8f4;opacity:0.33"></div><div class="wq" style="left:886.1px;top:588.9px;width:6.5px;height:6.2px;background:#00a8f4;opacity:0.33"></div><div class="wq" style="left:886.1px;top:598.4px;width:6.5px;height:6.5px;background:#00a8f4;opacity:0.33"></div><div class="wq" style="left:886.1px;top:608.2px;width:6.5px;height:6.5px;background:#00a8f4;opacity:0.33"></div><div class="wq" style="left:895.9px;top:588.9px;width:6.5px;height:6.2px;background:#00a8f4;opacity:0.33"></div><div class="wq" style="left:895.9px;top:598.4px;width:6.5px;height:6.5px;background:#00a8f4;opacity:0.33"></div><div class="wq" style="left:895.9px;top:608.2px;width:6.5px;height:6.5px;background:#00a8f4;opacity:0.33"></div>
<div class="t big" style="top:602.05px;left:889.35px;transform:translate(-50%,-50%);font-size:10.8px;line-height:12px;transform:translate(-50%,-50%) scaleX(0.72);">GET</div>
<div class="nb" style="left:868.6px;top:603.3px;width:6.8px;height:7.8px;line-height:7.2px;">0</div>
<div class="n" style="left:932.7px;top:588.7px;width:82.3px;height:28.6px"><div class="h" style="height:14.8px;background:linear-gradient(172deg,rgba(255,255,255,.13) 0%,rgba(255,255,255,0) 55%),linear-gradient(100deg,#6c9760 0%,#5b8151 40%,#2b3929 100%)"></div></div>
<div class="t ht" style="top:592px;left:942.5px;">Get Actor Location</div>
<div class="t st" style="top:600.1px;left:943px;">Target is Actor</div>
<div class="t fi" style="top:592.5px;left:936.5px;color:#95d884;">f</div>
<div class="t " style="top:611px;left:943.8px;">Target</div>
<div class="t " style="top:611px;right:485.8px;">Return Value</div>
<div class="n" style="left:302.8px;top:654.8px;width:125px;height:93.8px"><div class="h" style="height:8.3px;background:linear-gradient(90deg,#b3201f 0%,#9a1c1b 40%,#531514 100%)"></div></div>
<div class="t ht" style="top:659px;left:312.6px;">On Component Begin Overlap (AlternateBox)</div>
<div class="t " style="top:683px;right:1073px;">Overlapped Component</div>
<div class="t " style="top:695px;right:1073px;">Other Actor</div>
<div class="t " style="top:707px;right:1073px;">Other Comp</div>
<div class="t " style="top:719px;right:1073px;">Other Body Index</div>
<div class="t " style="top:731px;right:1073px;">From Sweep</div>
<div class="t " style="top:743px;right:1073px;">Sweep Result</div>
<div class="cn" style="left:453px;top:684.5px;width:53.4px;height:22.6px"></div>
<div class="t big" style="top:695.8px;left:479.7px;transform:translate(-50%,-50%);font-size:8.5px;line-height:12px;transform:translate(-50%,-50%) scaleX(0.9);"><span style="letter-spacing:.9px">==</span></div>
<div class="n" style="left:518.8px;top:654.9px;width:69.3px;height:33px"><div class="h" style="height:8.3px;background:linear-gradient(90deg,#a2a2a2 0%,#7a7a7a 30%,#3d3d3d 100%)"></div></div>
<div class="t ht" style="top:658.2px;left:528.6px;">Branch</div>
<div class="t " style="top:682.1px;left:529.9px;">Condition</div>
<div class="t " style="top:670.1px;right:911.3px;">True</div>
<div class="t " style="top:682.1px;right:911.3px;">False</div>
<div class="n" style="left:626.9px;top:654.9px;width:69.3px;height:33px"><div class="h" style="height:8.3px;background:linear-gradient(90deg,#a2a2a2 0%,#7a7a7a 30%,#3d3d3d 100%)"></div></div>
<div class="t ht" style="top:658.2px;left:636.7px;">Branch</div>
<div class="t " style="top:682.1px;left:638px;">Condition</div>
<div class="t " style="top:670.1px;right:803.2px;">True</div>
<div class="t " style="top:682.1px;right:803.2px;">False</div>
<div class="n" style="left:704.9px;top:654.9px;width:50px;height:44.2px"><div class="h" style="height:8.3px;background:linear-gradient(90deg,#a2a2a2 0%,#7a7a7a 30%,#3d3d3d 100%)"></div></div>
<div class="t ht" style="top:658.2px;left:714.7px;">Sequence</div>
<div class="t " style="top:670.1px;right:745px;">Then 0</div>
<div class="t " style="top:682.1px;right:745px;">Then 1</div>
<div class="t " style="top:695.9px;right:745.9px;">Add pin</div>
<div class="n" style="left:782.9px;top:654.9px;width:79.4px;height:57.1px"><div class="h" style="height:8.3px;background:linear-gradient(90deg,#a2a2a2 0%,#7a7a7a 30%,#3d3d3d 100%)"></div></div>
<div class="t ht" style="top:658.2px;left:792.7px;">For Each Loop</div>
<div class="t " style="top:670.1px;left:793px;">Exec</div>
<div class="t " style="top:682.1px;left:793px;">Array</div>
<div class="t " style="top:670.1px;right:637.1px;">Loop Body</div>
<div class="t " style="top:682.1px;right:638.5px;">Array Element</div>
<div class="t " style="top:694.1px;right:638.5px;">Array Index</div>
<div class="t " style="top:706.1px;right:637.1px;">Completed</div>
<div class="n" style="left:885px;top:654.9px;width:88.3px;height:33px"><div class="h" style="height:8.3px;background:linear-gradient(90deg,#a2a2a2 0%,#7a7a7a 30%,#3d3d3d 100%)"></div></div>
<div class="t ht" style="top:658.2px;left:894.8px;">Is Valid</div>
<div class="t ht" style="top:658.7px;left:888.1px;font-weight:bold;">?</div>
<div class="t " style="top:670.1px;left:895.1px;">Exec</div>
<div class="t " style="top:682.1px;left:896.1px;">Input Object</div>
<div class="t " style="top:670.1px;right:526.1px;">Is Valid</div>
<div class="t " style="top:682.1px;right:526.1px;">Is Not Valid</div>
<div class="n" style="left:999.3px;top:648.8px;width:117px;height:104.1px"><div class="h" style="height:14.8px;background:linear-gradient(172deg,rgba(255,255,255,.1) 0%,rgba(255,255,255,0) 55%),linear-gradient(100deg,#5a8dba 0%,#477196 40%,#1c2932 100%)"></div></div>
<div class="t ht" style="top:652.1px;left:1009.1px;">Set Actor Rotation</div>
<div class="t st" style="top:660.2px;left:1009.6px;color:#8bab88;">Target is Actor</div>
<div class="t fi" style="top:652.6px;left:1003.1px;color:#6eb4ec;">f</div>
<div class="t " style="top:682.8px;left:1010.4px;">Target</div>
<div class="t " style="top:694.9px;left:1010.4px;">New Rotation X (Roll)</div>
<div class="nb" style="left:1012.2px;top:698.2px;width:10.9px;height:7.6px;line-height:7px;">0.0</div>
<div class="t " style="top:713.9px;left:1010.4px;">New Rotation Y (Pitch)</div>
<div class="nb" style="left:1012.2px;top:717.3px;width:10.9px;height:7.6px;line-height:7px;">0.0</div>
<div class="t " style="top:733.8px;left:1010.4px;">New Rotation Z (Yaw)</div>
<div class="t " style="top:745.8px;left:1010.4px;">Teleport Physics</div>
<div class="cb" style="left:1051.9px;top:742.8px"></div>
<div class="t " style="top:682.8px;right:384.5px;">Return Value</div>
<div class="pl" style="left:530.5px;top:726.1px;width:47.8px;height:13.7px;--g:rgba(0,150,235,.75)"></div>
<div class="t " style="top:733.05px;right:923.1px;">Manne</div>
<div class="cn" style="left:584.9px;top:714.4px;width:68.3px;height:27.1px"></div>
<div class="wq" style="left:606px;top:714.8px;width:6.5px;height:6.2px;background:#00a8f4;opacity:0.33"></div><div class="wq" style="left:606px;top:724.3px;width:6.5px;height:6.5px;background:#00a8f4;opacity:0.33"></div><div class="wq" style="left:606px;top:734.1px;width:6.5px;height:6.5px;background:#00a8f4;opacity:0.33"></div><div class="wq" style="left:615.8px;top:714.8px;width:6.5px;height:6.2px;background:#00a8f4;opacity:0.33"></div><div class="wq" style="left:615.8px;top:724.3px;width:6.5px;height:6.5px;background:#00a8f4;opacity:0.33"></div><div class="wq" style="left:615.8px;top:734.1px;width:6.5px;height:6.5px;background:#00a8f4;opacity:0.33"></div><div class="wq" style="left:625.6px;top:714.8px;width:6.5px;height:6.2px;background:#00a8f4;opacity:0.33"></div><div class="wq" style="left:625.6px;top:724.3px;width:6.5px;height:6.5px;background:#00a8f4;opacity:0.33"></div><div class="wq" style="left:625.6px;top:734.1px;width:6.5px;height:6.5px;background:#00a8f4;opacity:0.33"></div>
<div class="t big" style="top:727.95px;left:619.05px;transform:translate(-50%,-50%);font-size:10.8px;line-height:12px;transform:translate(-50%,-50%) scaleX(0.72);">GET</div>
<div class="nb" style="left:598.3px;top:729.2px;width:6.8px;height:7.8px;line-height:7.2px;">0</div>
<div class="cn" style="left:506.7px;top:750.6px;width:61.5px;height:22px"></div>
<div class="t big" style="top:760.6px;left:536.4px;transform:translate(-50%,-50%);font-size:10.8px;line-height:12px;transform:translate(-50%,-50%) scaleX(0.72);">AND</div>
<div class="t " style="top:769px;right:932.1px;">Add pin</div>
<div class="cn" style="left:579px;top:750.6px;width:82.5px;height:26.8px"></div>
<div class="wq" style="left:607.2px;top:751px;width:6.5px;height:6.05px;background:#00a8f4;opacity:0.33"></div><div class="wq" style="left:607.2px;top:760.35px;width:6.5px;height:6.5px;background:#00a8f4;opacity:0.33"></div><div class="wq" style="left:607.2px;top:770.15px;width:6.5px;height:6.5px;background:#00a8f4;opacity:0.33"></div><div class="wq" style="left:617px;top:751px;width:6.5px;height:6.05px;background:#00a8f4;opacity:0.33"></div><div class="wq" style="left:617px;top:760.35px;width:6.5px;height:6.5px;background:#00a8f4;opacity:0.33"></div><div class="wq" style="left:617px;top:770.15px;width:6.5px;height:6.5px;background:#00a8f4;opacity:0.33"></div><div class="wq" style="left:626.8px;top:751px;width:6.5px;height:6.05px;background:#00a8f4;opacity:0.33"></div><div class="wq" style="left:626.8px;top:760.35px;width:6.5px;height:6.5px;background:#00a8f4;opacity:0.33"></div><div class="wq" style="left:626.8px;top:770.15px;width:6.5px;height:6.5px;background:#00a8f4;opacity:0.33"></div>
<div class="t big" style="top:764px;left:619.05px;transform:translate(-50%,-50%);font-size:10.8px;line-height:12px;transform:translate(-50%,-50%) scaleX(0.72);">IS NOT<br>EMPTY</div>
<div class="n" style="left:393px;top:756.6px;width:101.2px;height:22.3px"><div class="h" style="height:8.3px;background:linear-gradient(172deg,rgba(255,255,255,.13) 0%,rgba(255,255,255,0) 55%),linear-gradient(100deg,#6c9760 0%,#5b8151 40%,#2b3929 100%)"></div></div>
<div class="t ht" style="top:759.9px;left:402.8px;">Get Player Pawn</div>
<div class="t fi" style="top:760.4px;left:396.8px;color:#95d884;">f</div>
<div class="t " style="top:772px;left:404.1px;">Player Index</div>
<div class="nb" style="left:435.4px;top:768.6px;width:6.4px;height:6.8px;line-height:6.2px;">0</div>
<div class="t " style="top:772px;right:1006.6px;">Return Value</div>
<div class="n" style="left:662.9px;top:709px;width:103.7px;height:52.1px"><div class="h" style="height:14.8px;background:linear-gradient(172deg,rgba(255,255,255,.13) 0%,rgba(255,255,255,0) 55%),linear-gradient(100deg,#6c9760 0%,#5b8151 40%,#2b3929 100%)"></div></div>
<div class="t ht" style="top:712.3px;left:672.7px;">Get Actor Rotation</div>
<div class="t st" style="top:720.4px;left:673.2px;">Target is Actor</div>
<div class="t fi" style="top:712.8px;left:666.7px;color:#95d884;">f</div>
<div class="t " style="top:730.8px;left:674px;">Target</div>
<div class="t " style="top:730.8px;right:734.8px;">Return Value X (Roll)</div>
<div class="t " style="top:742.8px;right:734.8px;">Return Value Y (Pitch)</div>
<div class="t " style="top:754.8px;right:734.8px;">Return Value Z (Yaw)</div>
<div class="cn" style="left:752.8px;top:774.9px;width:53.4px;height:22.6px"></div>
<div class="t big" style="top:786.2px;left:779.5px;transform:translate(-50%,-50%);font-size:8.5px;line-height:12px;transform:translate(-50%,-50%) scaleX(0.9);"><span style="letter-spacing:.9px">==</span></div>
<div class="pl" style="left:800.7px;top:720.5px;width:48px;height:13.6px;--g:rgba(255,125,10,.7)"></div>
<div class="t " style="top:727.4px;right:652.7px;">Initial Loc</div>
<div class="cn" style="left:902.9px;top:696.6px;width:77.4px;height:60.1px"></div>
<div class="wq" style="left:928.55px;top:713.2px;width:6.5px;height:6.5px;background:#ff7300;opacity:0.27"></div><div class="wq" style="left:928.55px;top:723px;width:6.5px;height:6.5px;background:#ff7300;opacity:0.27"></div><div class="wq" style="left:928.55px;top:732.8px;width:6.5px;height:6.5px;background:#ff7300;opacity:0.27"></div><div class="wq" style="left:938.35px;top:713.2px;width:6.5px;height:6.5px;background:#ff7300;opacity:0.27"></div><div class="wq" style="left:938.35px;top:723px;width:6.5px;height:6.5px;background:#ff7300;opacity:0.27"></div><div class="wq" style="left:938.35px;top:732.8px;width:6.5px;height:6.5px;background:#ff7300;opacity:0.27"></div><div class="wq" style="left:948.15px;top:713.2px;width:6.5px;height:6.5px;background:#ff7300;opacity:0.27"></div><div class="wq" style="left:948.15px;top:723px;width:6.5px;height:6.5px;background:#ff7300;opacity:0.27"></div><div class="wq" style="left:948.15px;top:732.8px;width:6.5px;height:6.5px;background:#ff7300;opacity:0.27"></div>
<div class="t big" style="top:726.65px;left:941.6px;transform:translate(-50%,-50%);font-size:10.8px;line-height:12px;transform:translate(-50%,-50%) scaleX(0.72);">GET</div>
<div class="t " style="top:703px;right:519.9px;">Location</div>
<div class="t " style="top:715px;right:519.9px;">Rotation X (Roll)</div>
<div class="t " style="top:727px;right:519.9px;">Rotation Y (Pitch)</div>
<div class="t " style="top:739px;right:519.9px;">Rotation Z (Yaw)</div>
<div class="t " style="top:751px;right:519.9px;">Scale</div>
<div class="cn" style="left:999.3px;top:750.3px;width:61.4px;height:25.3px"></div>
<div class="t big" style="top:762.6px;left:1029.4px;transform:translate(-50%,-50%);font-size:9.5px;line-height:12px;transform:translate(-50%,-50%) scaleX(0.9);">+</div>
<div class="t dim2" style="top:769px;left:1014.6px;">180.0</div>
<div class="t " style="top:770.8px;right:439px;">Add pin</div>
<div class="cn" style="left:591.2px;top:793px;width:77.4px;height:60.1px"></div>
<div class="wq" style="left:616.85px;top:809.6px;width:6.5px;height:6.5px;background:#ff7300;opacity:0.27"></div><div class="wq" style="left:616.85px;top:819.4px;width:6.5px;height:6.5px;background:#ff7300;opacity:0.27"></div><div class="wq" style="left:616.85px;top:829.2px;width:6.5px;height:6.5px;background:#ff7300;opacity:0.27"></div><div class="wq" style="left:626.65px;top:809.6px;width:6.5px;height:6.5px;background:#ff7300;opacity:0.27"></div><div class="wq" style="left:626.65px;top:819.4px;width:6.5px;height:6.5px;background:#ff7300;opacity:0.27"></div><div class="wq" style="left:626.65px;top:829.2px;width:6.5px;height:6.5px;background:#ff7300;opacity:0.27"></div><div class="wq" style="left:636.45px;top:809.6px;width:6.5px;height:6.5px;background:#ff7300;opacity:0.27"></div><div class="wq" style="left:636.45px;top:819.4px;width:6.5px;height:6.5px;background:#ff7300;opacity:0.27"></div><div class="wq" style="left:636.45px;top:829.2px;width:6.5px;height:6.5px;background:#ff7300;opacity:0.27"></div>
<div class="t big" style="top:823.05px;left:629.9px;transform:translate(-50%,-50%);font-size:10.8px;line-height:12px;transform:translate(-50%,-50%) scaleX(0.72);">GET</div>
<div class="nb" style="left:604.4px;top:824.2px;width:6.8px;height:7.8px;line-height:7.2px;">0</div>
<div class="t " style="top:799.4px;right:831.6px;">Location</div>
<div class="t " style="top:811.4px;right:831.6px;">Rotation X (Roll)</div>
<div class="t " style="top:823.4px;right:831.6px;">Rotation Y (Pitch)</div>
<div class="t " style="top:835.4px;right:831.6px;">Rotation Z (Yaw)</div>
<div class="t " style="top:847.4px;right:831.6px;">Scale</div>
<div class="pl" style="left:536.5px;top:810.5px;width:48px;height:13.8px;--g:rgba(255,125,10,.7)"></div>
<div class="t " style="top:817.5px;right:916.9px;">Initial Loc</div>
<svg width="1489" height="906" style="left:0;top:0" fill="none" stroke-linecap="round"><defs><clipPath id="pc"><rect x="596.7" y="168.4" width="47.6" height="13.4" rx="5"/><rect x="927.1" y="156.4" width="47.3" height="13.5" rx="5"/><rect x="1238.6" y="192.4" width="47.8" height="13.2" rx="5"/><rect x="819" y="187" width="94" height="12.9" rx="5"/><rect x="630.6" y="380.8" width="47.5" height="13.6" rx="5"/><rect x="1029" y="378.2" width="47" height="13.5" rx="5"/><rect x="740.9" y="468.4" width="47.2" height="13.6" rx="5"/><rect x="974.7" y="474.3" width="47.7" height="13.5" rx="5"/><rect x="801" y="588.4" width="46.8" height="13.3" rx="5"/><rect x="530.6" y="726.2" width="47.6" height="13.5" rx="5"/><rect x="800.8" y="720.6" width="47.8" height="13.4" rx="5"/><rect x="536.6" y="810.6" width="47.8" height="13.6" rx="5"/></clipPath></defs><g clip-path="url(#pc)" opacity=".85"><use href="#wg"/></g></svg>
<svg id="pins" width="1489" height="906" style="left:0;top:0"><path d="M607.7 116L610.3 118.6L607.7 121.2L605.1 118.6Z" fill="none" stroke="#fff" stroke-width="1"/><path d="M608.3 117.3L606.9 118.6L608.3 119.9" fill="none" stroke="#fff" stroke-width=".9"/>
<rect x="657.3" y="117.3" width="3.4" height="3.4" fill="#1a0000" stroke="#ff2a2a" stroke-width=".9"/>
<path d="M655 127.75L657 127.75L659.25 130.5L657 133.25L655 133.25Z" fill="#fff" stroke="#fff" stroke-width=".4" stroke-linejoin="round"/>
<path d="M701.2 118.6H703.3M703.3 118.6L704.4 116.8H706.6M703.3 118.6L704.4 120.4H706.6" fill="none" stroke="#e8e8e8" stroke-width="1"/>
<path d="M702.9 127.25L704.9 127.25L707.15 130L704.9 132.75L702.9 132.75Z" fill="#fff" stroke="#fff" stroke-width=".4" stroke-linejoin="round"/>
<g><circle cx="705.2" cy="142" r="2.15" fill="#920101"/><path d="M707.1 140.85L708.7 142L707.1 143.15Z" fill="#920101"/></g>
<path d="M760.2 127.25L762.2 127.25L764.45 130L762.2 132.75L760.2 132.75Z" fill="#fff" stroke="#fff" stroke-width=".4" stroke-linejoin="round"/>
<path d="M760.4 139.45L761.8 139.45L764.2 142L761.8 144.55L760.4 144.55Z" fill="#0a0a0a" fill-opacity=".35" stroke="#fff" stroke-opacity=".16" stroke-width=".6"/><path d="M760.4 139.45L761.8 139.45L764.2 142L761.8 144.55L760.4 144.55" fill="none" stroke="#fff" stroke-width=".9" stroke-linejoin="round" stroke-linecap="round"/>
<path d="M798.4 116.6H801A1.6 1.6 0 0 1 801 119.8H798.4A1.6 1.6 0 0 1 798.4 116.6M799.2 118.8L800.2 120L799.2 121.2" fill="none" stroke="#e8e8e8" stroke-width="1"/>
<path d="M798.7 127.25L800.7 127.25L802.95 130L800.7 132.75L798.7 132.75Z" fill="#fff" stroke="#fff" stroke-width=".4" stroke-linejoin="round"/>
<rect x="798.7" y="139.9" width="1.75" height="1.75" fill="#00a8f4"/><rect x="798.7" y="142.35" width="1.75" height="1.75" fill="#00a8f4"/><rect x="801.15" y="139.9" width="1.75" height="1.75" fill="#00a8f4"/><rect x="801.15" y="142.35" width="1.75" height="1.75" fill="#00a8f4"/>
<path d="M866.1 127.25L868.1 127.25L870.35 130L868.1 132.75L866.1 132.75Z" fill="#fff" stroke="#fff" stroke-width=".4" stroke-linejoin="round"/>
<g><circle cx="866.7" cy="142" r="2.15" fill="#00a8f4"/><path d="M868.6 140.85L870.2 142L868.6 143.15Z" fill="#00a8f4"/></g>
<g><circle cx="866.7" cy="154" r="2.15" fill="#1fe3af"/><path d="M868.6 152.85L870.2 154L868.6 155.15Z" fill="#1fe3af"/></g>
<path d="M866.3 163.45L867.7 163.45L870.1 166L867.7 168.55L866.3 168.55Z" fill="#0a0a0a" fill-opacity=".35" stroke="#fff" stroke-opacity=".16" stroke-width=".6"/><path d="M866.3 163.45L867.7 163.45L870.1 166L867.7 168.55L866.3 168.55" fill="none" stroke="#fff" stroke-width=".9" stroke-linejoin="round" stroke-linecap="round"/>
<path d="M894.8 127.25L896.8 127.25L899.05 130L896.8 132.75L894.8 132.75Z" fill="#fff" stroke="#fff" stroke-width=".4" stroke-linejoin="round"/>
<g><circle cx="897.1" cy="142" r="2.15" fill="#00a8f4"/><path d="M899 140.85L900.6 142L899 143.15Z" fill="#00a8f4"/></g>
<path d="M971.1 127.25L973.1 127.25L975.35 130L973.1 132.75L971.1 132.75Z" fill="#fff" stroke="#fff" stroke-width=".4" stroke-linejoin="round"/>
<path d="M971.3 139.45L972.7 139.45L975.1 142L972.7 144.55L971.3 144.55Z" fill="#0a0a0a" fill-opacity=".35" stroke="#fff" stroke-opacity=".16" stroke-width=".6"/><path d="M971.3 139.45L972.7 139.45L975.1 142L972.7 144.55L971.3 144.55" fill="none" stroke="#fff" stroke-width=".9" stroke-linejoin="round" stroke-linecap="round"/>
<path d="M1032.8 127.25L1034.8 127.25L1037.05 130L1034.8 132.75L1032.8 132.75Z" fill="#fff" stroke="#fff" stroke-width=".4" stroke-linejoin="round"/>
<rect x="1032.8" y="138.9" width="1.75" height="1.75" fill="#ff7300"/><rect x="1032.8" y="141.35" width="1.75" height="1.75" fill="#ff7300"/><rect x="1035.25" y="138.9" width="1.75" height="1.75" fill="#ff7300"/><rect x="1035.25" y="141.35" width="1.75" height="1.75" fill="#ff7300"/>
<g><circle cx="1034.9" cy="151.1" r="2.15" fill="#ff7300"/></g>
<path d="M1069.6 127.25L1071.6 127.25L1073.85 130L1071.6 132.75L1069.6 132.75Z" fill="#fff" stroke="#fff" stroke-width=".4" stroke-linejoin="round"/>
<g><circle cx="1071" cy="141" r="1.7" fill="#0c0c0c" stroke="#1fe3af" stroke-width=".95"/><path d="M1073.05 139.85L1074.55 141L1073.05 142.15Z" fill="#1fe3af"/></g>
<circle cx="1117.2" cy="117.2" r="1.3" fill="#e8e8e8"/><path d="M1114.7 121.4Q1117.2 117.4 1119.7 121.4Z" fill="#e8e8e8"/><path d="M1118.7 120.1H1121.1M1119.9 118.9V121.3" stroke="#e8e8e8" stroke-width=".8"/>
<path d="M1116.8 127.25L1118.8 127.25L1121.05 130L1118.8 132.75L1116.8 132.75Z" fill="#fff" stroke="#fff" stroke-width=".4" stroke-linejoin="round"/>
<g><circle cx="1119.1" cy="146" r="1.7" fill="#0c0c0c" stroke="#5800bc" stroke-width=".95"/><path d="M1121.15 144.85L1122.65 146L1121.15 147.15Z" fill="#5800bc"/></g>
<path d="M1158.6 149.3l1.3 1.3l1.3-1.3" fill="none" stroke="#9a9a9a" stroke-width=".7"/>
<circle cx="1169" cy="149.8" r="2" fill="none" stroke="#3d3f3e" stroke-width=".6"/><path d="M1168.4 148.9l1.1 .9l-1.1 .9z" fill="#3d3f3e"/><circle cx="1175.4" cy="149.3" r="1.7" fill="none" stroke="#3d3f3e" stroke-width=".6"/><path d="M1176.6 150.6l1.4 1.5" stroke="#3d3f3e" stroke-width=".7"/>
<g><circle cx="1119.1" cy="163.2" r="2.15" fill="#ff7300"/><path d="M1121 162.05L1122.6 163.2L1121 164.35Z" fill="#ff7300"/></g>
<g><circle cx="1119.1" cy="180.2" r="1.7" fill="#0c0c0c" stroke="#016e64" stroke-width=".95"/><path d="M1121.15 179.05L1122.65 180.2L1121.15 181.35Z" fill="#016e64"/></g>
<path d="M1188.6 182.2l1.5 1.5l1.5-1.5" fill="none" stroke="#b0b0b0" stroke-width=".7"/>
<g><circle cx="1119.1" cy="197.2" r="1.7" fill="#0c0c0c" stroke="#00a8f4" stroke-width=".95"/><path d="M1121.15 196.05L1122.65 197.2L1121.15 198.35Z" fill="#00a8f4"/></g>
<path d="M1180.3 206.2l1.7 1.5l1.7-1.5" fill="none" stroke="#e0e0e0" stroke-width=".9"/>
<path d="M1243 127.25L1245 127.25L1247.25 130L1245 132.75L1243 132.75Z" fill="#fff" stroke="#fff" stroke-width=".4" stroke-linejoin="round"/>
<g><circle cx="1243.6" cy="142" r="2.15" fill="#00a8f4"/><path d="M1245.5 140.85L1247.1 142L1245.5 143.15Z" fill="#00a8f4"/></g>
<path d="M1261.2 127.25L1263.2 127.25L1265.45 130L1263.2 132.75L1261.2 132.75Z" fill="#fff" stroke="#fff" stroke-width=".4" stroke-linejoin="round"/>
<g><circle cx="1263.5" cy="142" r="2.15" fill="#00a8f4"/><path d="M1265.4 140.85L1267 142L1265.4 143.15Z" fill="#00a8f4"/></g>
<g><circle cx="1263.5" cy="154" r="2.15" fill="#00a8f4"/><path d="M1265.4 152.85L1267 154L1265.4 155.15Z" fill="#00a8f4"/></g>
<path d="M1320.5 127.25L1322.5 127.25L1324.75 130L1322.5 132.75L1320.5 132.75Z" fill="#fff" stroke="#fff" stroke-width=".4" stroke-linejoin="round"/>
<g><circle cx="1322" cy="142" r="1.7" fill="#0c0c0c" stroke="#00a8f4" stroke-width=".95"/><path d="M1324.05 140.85L1325.55 142L1324.05 143.15Z" fill="#00a8f4"/></g>
<path d="M1328.3 127.25L1330.3 127.25L1332.55 130L1330.3 132.75L1328.3 132.75Z" fill="#fff" stroke="#fff" stroke-width=".4" stroke-linejoin="round"/>
<g><circle cx="1330.6" cy="142" r="2.15" fill="#1fe3af"/><path d="M1332.5 140.85L1334.1 142L1332.5 143.15Z" fill="#1fe3af"/></g>
<g><circle cx="1330.6" cy="154" r="2.15" fill="#00a8f4"/><path d="M1332.5 152.85L1334.1 154L1332.5 155.15Z" fill="#00a8f4"/></g>
<path d="M1368.5 127.45L1369.9 127.45L1372.3 130L1369.9 132.55L1368.5 132.55Z" fill="#0a0a0a" fill-opacity=".35" stroke="#fff" stroke-opacity=".16" stroke-width=".6"/><path d="M1368.5 127.45L1369.9 127.45L1372.3 130L1369.9 132.55L1368.5 132.55" fill="none" stroke="#fff" stroke-width=".9" stroke-linejoin="round" stroke-linecap="round"/>
<g><circle cx="1368.6" cy="142" r="1.7" fill="#0c0c0c" stroke="#1fe3af" stroke-width=".95"/><path d="M1370.65 140.85L1372.15 142L1370.65 143.15Z" fill="#1fe3af"/></g>
<rect x="634.5" y="173.1" width="1.75" height="1.75" fill="#00a8f4"/><rect x="634.5" y="175.55" width="1.75" height="1.75" fill="#00a8f4"/><rect x="636.95" y="173.1" width="1.75" height="1.75" fill="#00a8f4"/><rect x="636.95" y="175.55" width="1.75" height="1.75" fill="#00a8f4"/>
<path d="M638.6 175.2H645.4" stroke="#00a8f4" stroke-width="2.4"/>
<rect x="964.6" y="161.15" width="1.75" height="1.75" fill="#ff7300"/><rect x="964.6" y="163.6" width="1.75" height="1.75" fill="#ff7300"/><rect x="967.05" y="161.15" width="1.75" height="1.75" fill="#ff7300"/><rect x="967.05" y="163.6" width="1.75" height="1.75" fill="#ff7300"/>
<path d="M968.7 163.25H975.5" stroke="#ff7300" stroke-width="2.4"/>
<g><circle cx="1278.7" cy="199.1" r="2.15" fill="#00a8f4"/><path d="M1280.6 197.95L1282.2 199.1L1280.6 200.25Z" fill="#00a8f4"/></g>
<path d="M1280.7 199.1H1287.5" stroke="#00a8f4" stroke-width="1.6"/>
<rect x="684.8" y="185.9" width="1.75" height="1.75" fill="#00a8f4"/><rect x="684.8" y="188.35" width="1.75" height="1.75" fill="#00a8f4"/><rect x="687.25" y="185.9" width="1.75" height="1.75" fill="#00a8f4"/><rect x="687.25" y="188.35" width="1.75" height="1.75" fill="#00a8f4"/>
<g><circle cx="754.9" cy="188" r="2.15" fill="#920101"/></g>
<g><circle cx="826" cy="193.3" r="2.15" fill="#00a8f4"/><path d="M827.9 192.15L829.5 193.3L827.9 194.45Z" fill="#00a8f4"/></g>
<g><circle cx="904" cy="193.3" r="2.15" fill="#00a8f4"/><path d="M905.9 192.15L907.5 193.3L905.9 194.45Z" fill="#00a8f4"/></g>
<path d="M906 193.3H914M818 193.3H824" stroke="#00a8f4" stroke-width="1.6"/>
<g><circle cx="825.1" cy="239" r="2.15" fill="#00a8f4"/><path d="M827 237.85L828.6 239L827 240.15Z" fill="#00a8f4"/></g>
<g><circle cx="898.5" cy="239" r="1.7" fill="#0c0c0c" stroke="#9aa5ff" stroke-width=".95"/><path d="M900.55 237.85L902.05 239L900.55 240.15Z" fill="#9aa5ff"/></g>
<g><circle cx="933.2" cy="221" r="2.15" fill="#00a8f4"/><path d="M935.1 219.85L936.7 221L935.1 222.15Z" fill="#00a8f4"/></g>
<g><circle cx="1006.8" cy="221" r="2.15" fill="#ff7300"/><path d="M1008.7 219.85L1010.3 221L1008.7 222.15Z" fill="#ff7300"/></g>
<path d="M583.3 314L585.9 316.6L583.3 319.2L580.7 316.6Z" fill="none" stroke="#fff" stroke-width="1"/><path d="M583.9 315.3L582.5 316.6L583.9 317.9" fill="none" stroke="#fff" stroke-width=".9"/>
<rect x="658.3" y="315.3" width="3.4" height="3.4" fill="#1a0000" stroke="#ff2a2a" stroke-width=".9"/>
<path d="M656 325.75L658 325.75L660.25 328.5L658 331.25L656 331.25Z" fill="#fff" stroke="#fff" stroke-width=".4" stroke-linejoin="round"/>
<g><circle cx="656.6" cy="341" r="1.7" fill="#0c0c0c" stroke="#00a8f4" stroke-width=".95"/><path d="M658.65 339.85L660.15 341L658.65 342.15Z" fill="#00a8f4"/></g>
<path d="M724.9 316.6H727M727 316.6L728.1 314.8H730.3M727 316.6L728.1 318.4H730.3" fill="none" stroke="#e8e8e8" stroke-width="1"/>
<path d="M726.6 325.25L728.6 325.25L730.85 328L728.6 330.75L726.6 330.75Z" fill="#fff" stroke="#fff" stroke-width=".4" stroke-linejoin="round"/>
<g><circle cx="728.9" cy="340" r="2.15" fill="#920101"/><path d="M730.8 338.85L732.4 340L730.8 341.15Z" fill="#920101"/></g>
<path d="M783.9 325.25L785.9 325.25L788.15 328L785.9 330.75L783.9 330.75Z" fill="#fff" stroke="#fff" stroke-width=".4" stroke-linejoin="round"/>
<path d="M784.1 337.45L785.5 337.45L787.9 340L785.5 342.55L784.1 342.55Z" fill="#0a0a0a" fill-opacity=".35" stroke="#fff" stroke-opacity=".16" stroke-width=".6"/><path d="M784.1 337.45L785.5 337.45L787.9 340L785.5 342.55L784.1 342.55" fill="none" stroke="#fff" stroke-width=".9" stroke-linejoin="round" stroke-linecap="round"/>
<path d="M815 316.6H817.1M817.1 316.6L818.2 314.8H820.4M817.1 316.6L818.2 318.4H820.4" fill="none" stroke="#e8e8e8" stroke-width="1"/>
<path d="M816.7 325.25L818.7 325.25L820.95 328L818.7 330.75L816.7 330.75Z" fill="#fff" stroke="#fff" stroke-width=".4" stroke-linejoin="round"/>
<g><circle cx="819" cy="340" r="2.15" fill="#920101"/><path d="M820.9 338.85L822.5 340L820.9 341.15Z" fill="#920101"/></g>
<path d="M874 325.25L876 325.25L878.25 328L876 330.75L874 330.75Z" fill="#fff" stroke="#fff" stroke-width=".4" stroke-linejoin="round"/>
<path d="M874.2 337.45L875.6 337.45L878 340L875.6 342.55L874.2 342.55Z" fill="#0a0a0a" fill-opacity=".35" stroke="#fff" stroke-opacity=".16" stroke-width=".6"/><path d="M874.2 337.45L875.6 337.45L878 340L875.6 342.55L874.2 342.55" fill="none" stroke="#fff" stroke-width=".9" stroke-linejoin="round" stroke-linecap="round"/>
<path d="M925 314.4L922.6 316.6L925 318.8Z" fill="#e8e8e8"/><path d="M926 314.7H928.4M926.7 314.7V319" stroke="#e8e8e8" stroke-width=".9"/>
<path d="M924.7 325.25L926.7 325.25L928.95 328L926.7 330.75L924.7 330.75Z" fill="#fff" stroke="#fff" stroke-width=".4" stroke-linejoin="round"/>
<path d="M962.2 325.25L964.2 325.25L966.45 328L964.2 330.75L962.2 330.75Z" fill="#fff" stroke="#fff" stroke-width=".4" stroke-linejoin="round"/>
<path d="M962.2 337.25L964.2 337.25L966.45 340L964.2 342.75L962.2 342.75Z" fill="#fff" stroke="#fff" stroke-width=".4" stroke-linejoin="round"/>
<circle cx="964.3" cy="353.8" r="2.6" fill="none" stroke="#e8e8e8" stroke-width=".7"/><path d="M963 353.8H965.6M964.3 352.5V355.1" stroke="#e8e8e8" stroke-width=".75"/>
<path d="M1008.2 314.6H1010.8A1.6 1.6 0 0 1 1010.8 317.8H1008.2A1.6 1.6 0 0 1 1008.2 314.6M1009 316.8L1010 318L1009 319.2" fill="none" stroke="#e8e8e8" stroke-width="1"/>
<path d="M1008.5 325.25L1010.5 325.25L1012.75 328L1010.5 330.75L1008.5 330.75Z" fill="#fff" stroke="#fff" stroke-width=".4" stroke-linejoin="round"/>
<rect x="1008.5" y="337.9" width="1.75" height="1.75" fill="#00a8f4"/><rect x="1008.5" y="340.35" width="1.75" height="1.75" fill="#00a8f4"/><rect x="1010.95" y="337.9" width="1.75" height="1.75" fill="#00a8f4"/><rect x="1010.95" y="340.35" width="1.75" height="1.75" fill="#00a8f4"/>
<path d="M1075.9 325.25L1077.9 325.25L1080.15 328L1077.9 330.75L1075.9 330.75Z" fill="#fff" stroke="#fff" stroke-width=".4" stroke-linejoin="round"/>
<g><circle cx="1076.5" cy="340" r="2.15" fill="#00a8f4"/><path d="M1078.4 338.85L1080 340L1078.4 341.15Z" fill="#00a8f4"/></g>
<g><circle cx="1076.5" cy="352" r="2.15" fill="#1fe3af"/><path d="M1078.4 350.85L1080 352L1078.4 353.15Z" fill="#1fe3af"/></g>
<path d="M1076.1 361.45L1077.5 361.45L1079.9 364L1077.5 366.55L1076.1 366.55Z" fill="#0a0a0a" fill-opacity=".35" stroke="#fff" stroke-opacity=".16" stroke-width=".6"/><path d="M1076.1 361.45L1077.5 361.45L1079.9 364L1077.5 366.55L1076.1 366.55" fill="none" stroke="#fff" stroke-width=".9" stroke-linejoin="round" stroke-linecap="round"/>
<path d="M1116.7 325.25L1118.7 325.25L1120.95 328L1118.7 330.75L1116.7 330.75Z" fill="#fff" stroke="#fff" stroke-width=".4" stroke-linejoin="round"/>
<g><circle cx="1119" cy="340" r="2.15" fill="#00a8f4"/><path d="M1120.9 338.85L1122.5 340L1120.9 341.15Z" fill="#00a8f4"/></g>
<path d="M1193 325.25L1195 325.25L1197.25 328L1195 330.75L1193 330.75Z" fill="#fff" stroke="#fff" stroke-width=".4" stroke-linejoin="round"/>
<path d="M1193.2 337.45L1194.6 337.45L1197 340L1194.6 342.55L1193.2 342.55Z" fill="#0a0a0a" fill-opacity=".35" stroke="#fff" stroke-opacity=".16" stroke-width=".6"/><path d="M1193.2 337.45L1194.6 337.45L1197 340L1194.6 342.55L1193.2 342.55" fill="none" stroke="#fff" stroke-width=".9" stroke-linejoin="round" stroke-linecap="round"/>
<path d="M1224.8 326.15L1226.8 326.15L1229.05 328.9L1226.8 331.65L1224.8 331.65Z" fill="#fff" stroke="#fff" stroke-width=".4" stroke-linejoin="round"/>
<g><circle cx="1227.1" cy="340.9" r="2.15" fill="#00a8f4"/><path d="M1229 339.75L1230.6 340.9L1229 342.05Z" fill="#00a8f4"/></g>
<g><circle cx="1227.1" cy="356.9" r="1.7" fill="#0c0c0c" stroke="#3bb21a" stroke-width=".95"/><path d="M1229.15 355.75L1230.65 356.9L1229.15 358.05Z" fill="#3bb21a"/></g>
<g><circle cx="1227.1" cy="375.9" r="1.7" fill="#0c0c0c" stroke="#3bb21a" stroke-width=".95"/><path d="M1229.15 374.75L1230.65 375.9L1229.15 377.05Z" fill="#3bb21a"/></g>
<g><circle cx="1227.1" cy="391.9" r="2.15" fill="#38d500"/><path d="M1229 390.75L1230.6 391.9L1229 393.05Z" fill="#38d500"/></g>
<g><circle cx="1227.1" cy="403.9" r="1.7" fill="#0c0c0c" stroke="#920101" stroke-width=".95"/><path d="M1229.15 402.75L1230.65 403.9L1229.15 405.05Z" fill="#920101"/></g>
<path d="M1330 326.35L1331.4 326.35L1333.8 328.9L1331.4 331.45L1330 331.45Z" fill="#0a0a0a" fill-opacity=".35" stroke="#fff" stroke-opacity=".16" stroke-width=".6"/><path d="M1330 326.35L1331.4 326.35L1333.8 328.9L1331.4 331.45L1330 331.45" fill="none" stroke="#fff" stroke-width=".9" stroke-linejoin="round" stroke-linecap="round"/>
<g><circle cx="1330.4" cy="340.9" r="1.7" fill="#0c0c0c" stroke="#920101" stroke-width=".95"/><path d="M1332.45 339.75L1333.95 340.9L1332.45 342.05Z" fill="#920101"/></g>
<rect x="690.8" y="371.9" width="1.75" height="1.75" fill="#00a8f4"/><rect x="690.8" y="374.35" width="1.75" height="1.75" fill="#00a8f4"/><rect x="693.25" y="371.9" width="1.75" height="1.75" fill="#00a8f4"/><rect x="693.25" y="374.35" width="1.75" height="1.75" fill="#00a8f4"/>
<g><circle cx="760.9" cy="374" r="2.15" fill="#920101"/></g>
<rect x="668.3" y="385.6" width="1.75" height="1.75" fill="#00a8f4"/><rect x="668.3" y="388.05" width="1.75" height="1.75" fill="#00a8f4"/><rect x="670.75" y="385.6" width="1.75" height="1.75" fill="#00a8f4"/><rect x="670.75" y="388.05" width="1.75" height="1.75" fill="#00a8f4"/>
<path d="M672.4 387.7H679.2" stroke="#00a8f4" stroke-width="2.4"/>
<rect x="745" y="418.8" width="1.75" height="1.75" fill="#00a8f4"/><rect x="745" y="421.25" width="1.75" height="1.75" fill="#00a8f4"/><rect x="747.45" y="418.8" width="1.75" height="1.75" fill="#00a8f4"/><rect x="747.45" y="421.25" width="1.75" height="1.75" fill="#00a8f4"/>
<g><circle cx="747.4" cy="432.9" r="1.7" fill="#0c0c0c" stroke="#1fe3af" stroke-width=".95"/><path d="M749.45 431.75L750.95 432.9L749.45 434.05Z" fill="#1fe3af"/></g>
<g><circle cx="800.5" cy="427.9" r="2.15" fill="#00a8f4"/></g>
<g><circle cx="872.8" cy="388.8" r="2.15" fill="#00a8f4"/><path d="M874.7 387.65L876.3 388.8L874.7 389.95Z" fill="#00a8f4"/></g>
<g><circle cx="962.2" cy="388.8" r="1.7" fill="#0c0c0c" stroke="#3bb21a" stroke-width=".95"/><path d="M964.25 387.65L965.75 388.8L964.25 389.95Z" fill="#3bb21a"/></g>
<g><circle cx="962.2" cy="400.8" r="1.7" fill="#0c0c0c" stroke="#3bb21a" stroke-width=".95"/><path d="M964.25 399.65L965.75 400.8L964.25 401.95Z" fill="#3bb21a"/></g>
<g><circle cx="962.2" cy="412.8" r="2.15" fill="#38d500"/><path d="M964.1 411.65L965.7 412.8L964.1 413.95Z" fill="#38d500"/></g>
<rect x="1066.2" y="382.95" width="1.75" height="1.75" fill="#ff7300"/><rect x="1066.2" y="385.4" width="1.75" height="1.75" fill="#ff7300"/><rect x="1068.65" y="382.95" width="1.75" height="1.75" fill="#ff7300"/><rect x="1068.65" y="385.4" width="1.75" height="1.75" fill="#ff7300"/>
<path d="M1070.3 385.05H1077.1" stroke="#ff7300" stroke-width="2.4"/>
<rect x="1117" y="377.8" width="1.75" height="1.75" fill="#ff7300"/><rect x="1117" y="380.25" width="1.75" height="1.75" fill="#ff7300"/><rect x="1119.45" y="377.8" width="1.75" height="1.75" fill="#ff7300"/><rect x="1119.45" y="380.25" width="1.75" height="1.75" fill="#ff7300"/>
<g><circle cx="1119.3" cy="390" r="2.15" fill="#1fe3af"/></g>
<g><circle cx="1182.3" cy="361" r="1.7" fill="#0c0c0c" stroke="#fec71a" stroke-width=".95"/><path d="M1184.35 359.85L1185.85 361L1184.35 362.15Z" fill="#fec71a"/></g>
<g><circle cx="1182.3" cy="373" r="1.7" fill="#0c0c0c" stroke="#3bb21a" stroke-width=".95"/><path d="M1184.35 371.85L1185.85 373L1184.35 374.15Z" fill="#3bb21a"/></g>
<g><circle cx="1182.3" cy="385" r="1.7" fill="#0c0c0c" stroke="#3bb21a" stroke-width=".95"/><path d="M1184.35 383.85L1185.85 385L1184.35 386.15Z" fill="#3bb21a"/></g>
<g><circle cx="1182.3" cy="397" r="2.15" fill="#38d500"/><path d="M1184.2 395.85L1185.8 397L1184.2 398.15Z" fill="#38d500"/></g>
<g><circle cx="1182.3" cy="409" r="1.7" fill="#0c0c0c" stroke="#fec71a" stroke-width=".95"/><path d="M1184.35 407.85L1185.85 409L1184.35 410.15Z" fill="#fec71a"/></g>
<circle cx="873.4" cy="438.7" r="1.75" fill="#8f8590" fill-opacity=".85" stroke="#3bb21a" stroke-width=".9"/>
<circle cx="873.4" cy="449.8" r="1.75" fill="#8f8590" fill-opacity=".85" stroke="#3bb21a" stroke-width=".9"/>
<rect x="910.7" y="442.4" width="3.6" height="3.6" rx=".8" fill="#3a2a2a" fill-opacity=".5" stroke="#c03a3a" stroke-width=".9"/>
<rect x="799" y="471.7" width="1.75" height="1.75" fill="#ff7300"/><rect x="799" y="474.15" width="1.75" height="1.75" fill="#ff7300"/><rect x="801.45" y="471.7" width="1.75" height="1.75" fill="#ff7300"/><rect x="801.45" y="474.15" width="1.75" height="1.75" fill="#ff7300"/>
<g><circle cx="801.3" cy="485.6" r="1.7" fill="#0c0c0c" stroke="#1fe3af" stroke-width=".95"/><path d="M803.35 484.45L804.85 485.6L803.35 486.75Z" fill="#1fe3af"/></g>
<g><circle cx="864.3" cy="456.9" r="1.7" fill="#0c0c0c" stroke="#fec71a" stroke-width=".95"/><path d="M866.35 455.75L867.85 456.9L866.35 458.05Z" fill="#fec71a"/></g>
<g><circle cx="864.3" cy="468.9" r="1.7" fill="#0c0c0c" stroke="#3bb21a" stroke-width=".95"/><path d="M866.35 467.75L867.85 468.9L866.35 470.05Z" fill="#3bb21a"/></g>
<g><circle cx="864.3" cy="480.9" r="1.7" fill="#0c0c0c" stroke="#3bb21a" stroke-width=".95"/><path d="M866.35 479.75L867.85 480.9L866.35 482.05Z" fill="#3bb21a"/></g>
<g><circle cx="864.3" cy="492.9" r="2.15" fill="#38d500"/><path d="M866.2 491.75L867.8 492.9L866.2 494.05Z" fill="#38d500"/></g>
<g><circle cx="864.3" cy="504.9" r="1.7" fill="#0c0c0c" stroke="#fec71a" stroke-width=".95"/><path d="M866.35 503.75L867.85 504.9L866.35 506.05Z" fill="#fec71a"/></g>
<rect x="778.3" y="473.2" width="1.75" height="1.75" fill="#ff7300"/><rect x="778.3" y="475.65" width="1.75" height="1.75" fill="#ff7300"/><rect x="780.75" y="473.2" width="1.75" height="1.75" fill="#ff7300"/><rect x="780.75" y="475.65" width="1.75" height="1.75" fill="#ff7300"/>
<path d="M782.4 475.3H789.2" stroke="#ff7300" stroke-width="2.4"/>
<g><circle cx="1014.7" cy="481.15" r="2.15" fill="#00a8f4"/><path d="M1016.6 480L1018.2 481.15L1016.6 482.3Z" fill="#00a8f4"/></g>
<path d="M1016.7 481.15H1023.5" stroke="#00a8f4" stroke-width="1.6"/>
<path d="M1086.7 439.15L1088.7 439.15L1090.95 441.9L1088.7 444.65L1086.7 444.65Z" fill="#fff" stroke="#fff" stroke-width=".4" stroke-linejoin="round"/>
<g><circle cx="1089" cy="454" r="2.15" fill="#00a8f4"/><path d="M1090.9 452.85L1092.5 454L1090.9 455.15Z" fill="#00a8f4"/></g>
<g><circle cx="1089" cy="466" r="2.15" fill="#fec71a"/><path d="M1090.9 464.85L1092.5 466L1090.9 467.15Z" fill="#fec71a"/></g>
<g><circle cx="1089" cy="482" r="1.7" fill="#0c0c0c" stroke="#9aa5ff" stroke-width=".95"/><path d="M1091.05 480.85L1092.55 482L1091.05 483.15Z" fill="#9aa5ff"/></g>
<g><circle cx="1089" cy="499.4" r="1.7" fill="#0c0c0c" stroke="#3bb21a" stroke-width=".95"/><path d="M1091.05 498.25L1092.55 499.4L1091.05 500.55Z" fill="#3bb21a"/></g>
<g><circle cx="1089" cy="513" r="1.7" fill="#0c0c0c" stroke="#3bb21a" stroke-width=".95"/><path d="M1091.05 511.85L1092.55 513L1091.05 514.15Z" fill="#3bb21a"/></g>
<g><circle cx="1089" cy="526.2" r="1.7" fill="#0c0c0c" stroke="#3bb21a" stroke-width=".95"/><path d="M1091.05 525.05L1092.55 526.2L1091.05 527.35Z" fill="#3bb21a"/></g>
<g><circle cx="1089" cy="543.6" r="1.7" fill="#0c0c0c" stroke="#00a8f4" stroke-width=".95"/><path d="M1091.05 542.45L1092.55 543.6L1091.05 544.75Z" fill="#00a8f4"/></g>
<path d="M1121.6 546.3l1.3 1.3l1.3-1.3" fill="none" stroke="#9a9a9a" stroke-width=".7"/>
<circle cx="1131.6" cy="547" r="2" fill="none" stroke="#3d3f3e" stroke-width=".6"/><path d="M1131 546.1l1.1 .9l-1.1 .9z" fill="#3d3f3e"/><circle cx="1138.2" cy="546.5" r="1.7" fill="none" stroke="#3d3f3e" stroke-width=".6"/><path d="M1139.4 547.8l1.4 1.5" stroke="#3d3f3e" stroke-width=".7"/>
<g><circle cx="1089" cy="564.6" r="1.7" fill="#0c0c0c" stroke="#00a8f4" stroke-width=".95"/><path d="M1091.05 563.45L1092.55 564.6L1091.05 565.75Z" fill="#00a8f4"/></g>
<path d="M1121.6 567.3l1.3 1.3l1.3-1.3" fill="none" stroke="#9a9a9a" stroke-width=".7"/>
<circle cx="1131.6" cy="568" r="2" fill="none" stroke="#3d3f3e" stroke-width=".6"/><path d="M1131 567.1l1.1 .9l-1.1 .9z" fill="#3d3f3e"/><circle cx="1138.2" cy="567.5" r="1.7" fill="none" stroke="#3d3f3e" stroke-width=".6"/><path d="M1139.4 568.8l1.4 1.5" stroke="#3d3f3e" stroke-width=".7"/>
<g><circle cx="1089" cy="582" r="1.7" fill="#0c0c0c" stroke="#920101" stroke-width=".95"/><path d="M1091.05 580.85L1092.55 582L1091.05 583.15Z" fill="#920101"/></g>
<path d="M1129.2 582.2l1.1 1.2l2-2.6" fill="none" stroke="#2a7de1" stroke-width=".9"/>
<path d="M1140 592.6l1.8-1.6l1.8 1.6" fill="none" stroke="#e0e0e0" stroke-width=".9"/>
<path d="M1194.2 439.35L1195.6 439.35L1198 441.9L1195.6 444.45L1194.2 444.45Z" fill="#0a0a0a" fill-opacity=".35" stroke="#fff" stroke-opacity=".16" stroke-width=".6"/><path d="M1194.2 439.35L1195.6 439.35L1198 441.9L1195.6 444.45L1194.2 444.45" fill="none" stroke="#fff" stroke-width=".9" stroke-linejoin="round" stroke-linecap="round"/>
<g><circle cx="1194.6" cy="454" r="1.7" fill="#0c0c0c" stroke="#00a8f4" stroke-width=".95"/><path d="M1196.65 452.85L1198.15 454L1196.65 455.15Z" fill="#00a8f4"/></g>
<rect x="838" y="593.05" width="1.75" height="1.75" fill="#00a8f4"/><rect x="838" y="595.5" width="1.75" height="1.75" fill="#00a8f4"/><rect x="840.45" y="593.05" width="1.75" height="1.75" fill="#00a8f4"/><rect x="840.45" y="595.5" width="1.75" height="1.75" fill="#00a8f4"/>
<path d="M842.1 595.15H848.9" stroke="#00a8f4" stroke-width="2.4"/>
<rect x="859.4" y="593" width="1.75" height="1.75" fill="#00a8f4"/><rect x="859.4" y="595.45" width="1.75" height="1.75" fill="#00a8f4"/><rect x="861.85" y="593" width="1.75" height="1.75" fill="#00a8f4"/><rect x="861.85" y="595.45" width="1.75" height="1.75" fill="#00a8f4"/>
<g><circle cx="861.8" cy="607.1" r="1.7" fill="#0c0c0c" stroke="#1fe3af" stroke-width=".95"/><path d="M863.85 605.95L865.35 607.1L863.85 608.25Z" fill="#1fe3af"/></g>
<g><circle cx="914.9" cy="602.1" r="2.15" fill="#00a8f4"/></g>
<g><circle cx="938.8" cy="611" r="2.15" fill="#00a8f4"/><path d="M940.7 609.85L942.3 611L940.7 612.15Z" fill="#00a8f4"/></g>
<g><circle cx="1007.4" cy="611" r="2.15" fill="#fec71a"/><path d="M1009.3 609.85L1010.9 611L1009.3 612.15Z" fill="#fec71a"/></g>
<path d="M307.5 656L310.1 658.6L307.5 661.2L304.9 658.6Z" fill="none" stroke="#fff" stroke-width="1"/><path d="M308.1 657.3L306.7 658.6L308.1 659.9" fill="none" stroke="#fff" stroke-width=".9"/>
<rect x="421.9" y="657.3" width="3.4" height="3.4" fill="#1a0000" stroke="#ff2a2a" stroke-width=".9"/>
<path d="M419.6 667.85L421.6 667.85L423.85 670.6L421.6 673.35L419.6 673.35Z" fill="#fff" stroke="#fff" stroke-width=".4" stroke-linejoin="round"/>
<g><circle cx="420.2" cy="683" r="1.7" fill="#0c0c0c" stroke="#00a8f4" stroke-width=".95"/><path d="M422.25 681.85L423.75 683L422.25 684.15Z" fill="#00a8f4"/></g>
<g><circle cx="420.2" cy="695" r="2.15" fill="#00a8f4"/><path d="M422.1 693.85L423.7 695L422.1 696.15Z" fill="#00a8f4"/></g>
<g><circle cx="420.2" cy="707" r="1.7" fill="#0c0c0c" stroke="#00a8f4" stroke-width=".95"/><path d="M422.25 705.85L423.75 707L422.25 708.15Z" fill="#00a8f4"/></g>
<g><circle cx="420.2" cy="719" r="1.7" fill="#0c0c0c" stroke="#1fe3af" stroke-width=".95"/><path d="M422.25 717.85L423.75 719L422.25 720.15Z" fill="#1fe3af"/></g>
<g><circle cx="420.2" cy="731" r="1.7" fill="#0c0c0c" stroke="#920101" stroke-width=".95"/><path d="M422.25 729.85L423.75 731L422.25 732.15Z" fill="#920101"/></g>
<g><circle cx="420.2" cy="743" r="1.7" fill="#0c0c0c" stroke="#0057c7" stroke-width=".95"/><path d="M422.25 741.85L423.75 743L422.25 744.15Z" fill="#0057c7"/></g>
<circle cx="459.7" cy="690.4" r="1.75" fill="#7f93a3" fill-opacity=".85" stroke="#00a8f4" stroke-width=".9"/>
<circle cx="459.7" cy="701.5" r="1.75" fill="#7f93a3" fill-opacity=".85" stroke="#00a8f4" stroke-width=".9"/>
<rect x="497" y="694.1" width="3.6" height="3.6" rx=".8" fill="#3a2a2a" fill-opacity=".5" stroke="#c03a3a" stroke-width=".9"/>
<path d="M520.9 658.7H523M523 658.7L524.1 656.9H526.3M523 658.7L524.1 660.5H526.3" fill="none" stroke="#e8e8e8" stroke-width="1"/>
<path d="M522.6 667.35L524.6 667.35L526.85 670.1L524.6 672.85L522.6 672.85Z" fill="#fff" stroke="#fff" stroke-width=".4" stroke-linejoin="round"/>
<g><circle cx="524.9" cy="682.1" r="2.15" fill="#920101"/><path d="M526.8 680.95L528.4 682.1L526.8 683.25Z" fill="#920101"/></g>
<path d="M579.9 667.35L581.9 667.35L584.15 670.1L581.9 672.85L579.9 672.85Z" fill="#fff" stroke="#fff" stroke-width=".4" stroke-linejoin="round"/>
<path d="M580.1 679.55L581.5 679.55L583.9 682.1L581.5 684.65L580.1 684.65Z" fill="#0a0a0a" fill-opacity=".35" stroke="#fff" stroke-opacity=".16" stroke-width=".6"/><path d="M580.1 679.55L581.5 679.55L583.9 682.1L581.5 684.65L580.1 684.65" fill="none" stroke="#fff" stroke-width=".9" stroke-linejoin="round" stroke-linecap="round"/>
<path d="M629 658.7H631.1M631.1 658.7L632.2 656.9H634.4M631.1 658.7L632.2 660.5H634.4" fill="none" stroke="#e8e8e8" stroke-width="1"/>
<path d="M630.7 667.35L632.7 667.35L634.95 670.1L632.7 672.85L630.7 672.85Z" fill="#fff" stroke="#fff" stroke-width=".4" stroke-linejoin="round"/>
<g><circle cx="633" cy="682.1" r="2.15" fill="#920101"/><path d="M634.9 680.95L636.5 682.1L634.9 683.25Z" fill="#920101"/></g>
<path d="M688 667.35L690 667.35L692.25 670.1L690 672.85L688 672.85Z" fill="#fff" stroke="#fff" stroke-width=".4" stroke-linejoin="round"/>
<path d="M688.2 679.55L689.6 679.55L692 682.1L689.6 684.65L688.2 684.65Z" fill="#0a0a0a" fill-opacity=".35" stroke="#fff" stroke-opacity=".16" stroke-width=".6"/><path d="M688.2 679.55L689.6 679.55L692 682.1L689.6 684.65L688.2 684.65" fill="none" stroke="#fff" stroke-width=".9" stroke-linejoin="round" stroke-linecap="round"/>
<path d="M709 656.5L706.6 658.7L709 660.9Z" fill="#e8e8e8"/><path d="M710 656.8H712.4M710.7 656.8V661.1" stroke="#e8e8e8" stroke-width=".9"/>
<path d="M708.7 667.35L710.7 667.35L712.95 670.1L710.7 672.85L708.7 672.85Z" fill="#fff" stroke="#fff" stroke-width=".4" stroke-linejoin="round"/>
<path d="M746.2 667.35L748.2 667.35L750.45 670.1L748.2 672.85L746.2 672.85Z" fill="#fff" stroke="#fff" stroke-width=".4" stroke-linejoin="round"/>
<path d="M746.2 679.35L748.2 679.35L750.45 682.1L748.2 684.85L746.2 684.85Z" fill="#fff" stroke="#fff" stroke-width=".4" stroke-linejoin="round"/>
<circle cx="748.3" cy="695.9" r="2.6" fill="none" stroke="#e8e8e8" stroke-width=".7"/><path d="M747 695.9H749.6M748.3 694.6V697.2" stroke="#e8e8e8" stroke-width=".75"/>
<path d="M786.4 656.7H789A1.6 1.6 0 0 1 789 659.9H786.4A1.6 1.6 0 0 1 786.4 656.7M787.2 658.9L788.2 660.1L787.2 661.3" fill="none" stroke="#e8e8e8" stroke-width="1"/>
<path d="M786.7 667.35L788.7 667.35L790.95 670.1L788.7 672.85L786.7 672.85Z" fill="#fff" stroke="#fff" stroke-width=".4" stroke-linejoin="round"/>
<rect x="786.7" y="680" width="1.75" height="1.75" fill="#00a8f4"/><rect x="786.7" y="682.45" width="1.75" height="1.75" fill="#00a8f4"/><rect x="789.15" y="680" width="1.75" height="1.75" fill="#00a8f4"/><rect x="789.15" y="682.45" width="1.75" height="1.75" fill="#00a8f4"/>
<path d="M854.1 667.35L856.1 667.35L858.35 670.1L856.1 672.85L854.1 672.85Z" fill="#fff" stroke="#fff" stroke-width=".4" stroke-linejoin="round"/>
<g><circle cx="854.7" cy="682.1" r="2.15" fill="#00a8f4"/><path d="M856.6 680.95L858.2 682.1L856.6 683.25Z" fill="#00a8f4"/></g>
<g><circle cx="854.7" cy="694.1" r="2.15" fill="#1fe3af"/><path d="M856.6 692.95L858.2 694.1L856.6 695.25Z" fill="#1fe3af"/></g>
<path d="M854.3 703.55L855.7 703.55L858.1 706.1L855.7 708.65L854.3 708.65Z" fill="#0a0a0a" fill-opacity=".35" stroke="#fff" stroke-opacity=".16" stroke-width=".6"/><path d="M854.3 703.55L855.7 703.55L858.1 706.1L855.7 708.65L854.3 708.65" fill="none" stroke="#fff" stroke-width=".9" stroke-linejoin="round" stroke-linecap="round"/>
<path d="M888.8 667.35L890.8 667.35L893.05 670.1L890.8 672.85L888.8 672.85Z" fill="#fff" stroke="#fff" stroke-width=".4" stroke-linejoin="round"/>
<g><circle cx="891.1" cy="682.1" r="2.15" fill="#00a8f4"/><path d="M893 680.95L894.6 682.1L893 683.25Z" fill="#00a8f4"/></g>
<path d="M965.1 667.35L967.1 667.35L969.35 670.1L967.1 672.85L965.1 672.85Z" fill="#fff" stroke="#fff" stroke-width=".4" stroke-linejoin="round"/>
<path d="M965.3 679.55L966.7 679.55L969.1 682.1L966.7 684.65L965.3 684.65Z" fill="#0a0a0a" fill-opacity=".35" stroke="#fff" stroke-opacity=".16" stroke-width=".6"/><path d="M965.3 679.55L966.7 679.55L969.1 682.1L966.7 684.65L965.3 684.65" fill="none" stroke="#fff" stroke-width=".9" stroke-linejoin="round" stroke-linecap="round"/>
<path d="M1003.1 668.05L1005.1 668.05L1007.35 670.8L1005.1 673.55L1003.1 673.55Z" fill="#fff" stroke="#fff" stroke-width=".4" stroke-linejoin="round"/>
<g><circle cx="1005.4" cy="682.8" r="2.15" fill="#00a8f4"/><path d="M1007.3 681.65L1008.9 682.8L1007.3 683.95Z" fill="#00a8f4"/></g>
<g><circle cx="1005.4" cy="698.8" r="1.7" fill="#0c0c0c" stroke="#3bb21a" stroke-width=".95"/><path d="M1007.45 697.65L1008.95 698.8L1007.45 699.95Z" fill="#3bb21a"/></g>
<g><circle cx="1005.4" cy="717.8" r="1.7" fill="#0c0c0c" stroke="#3bb21a" stroke-width=".95"/><path d="M1007.45 716.65L1008.95 717.8L1007.45 718.95Z" fill="#3bb21a"/></g>
<g><circle cx="1005.4" cy="733.8" r="2.15" fill="#38d500"/><path d="M1007.3 732.65L1008.9 733.8L1007.3 734.95Z" fill="#38d500"/></g>
<g><circle cx="1005.4" cy="745.8" r="1.7" fill="#0c0c0c" stroke="#920101" stroke-width=".95"/><path d="M1007.45 744.65L1008.95 745.8L1007.45 746.95Z" fill="#920101"/></g>
<path d="M1108.3 668.25L1109.7 668.25L1112.1 670.8L1109.7 673.35L1108.3 673.35Z" fill="#0a0a0a" fill-opacity=".35" stroke="#fff" stroke-opacity=".16" stroke-width=".6"/><path d="M1108.3 668.25L1109.7 668.25L1112.1 670.8L1109.7 673.35L1108.3 673.35" fill="none" stroke="#fff" stroke-width=".9" stroke-linejoin="round" stroke-linecap="round"/>
<g><circle cx="1108.7" cy="682.8" r="1.7" fill="#0c0c0c" stroke="#920101" stroke-width=".95"/><path d="M1110.75 681.65L1112.25 682.8L1110.75 683.95Z" fill="#920101"/></g>
<rect x="568.4" y="730.95" width="1.75" height="1.75" fill="#00a8f4"/><rect x="568.4" y="733.4" width="1.75" height="1.75" fill="#00a8f4"/><rect x="570.85" y="730.95" width="1.75" height="1.75" fill="#00a8f4"/><rect x="570.85" y="733.4" width="1.75" height="1.75" fill="#00a8f4"/>
<path d="M572.5 733.05H579.3" stroke="#00a8f4" stroke-width="2.4"/>
<rect x="589.1" y="718.9" width="1.75" height="1.75" fill="#00a8f4"/><rect x="589.1" y="721.35" width="1.75" height="1.75" fill="#00a8f4"/><rect x="591.55" y="718.9" width="1.75" height="1.75" fill="#00a8f4"/><rect x="591.55" y="721.35" width="1.75" height="1.75" fill="#00a8f4"/>
<g><circle cx="591.5" cy="733" r="1.7" fill="#0c0c0c" stroke="#1fe3af" stroke-width=".95"/><path d="M593.55 731.85L595.05 733L593.55 734.15Z" fill="#1fe3af"/></g>
<g><circle cx="644.6" cy="728" r="2.15" fill="#00a8f4"/></g>
<g><circle cx="513.4" cy="755.9" r="2.15" fill="#920101"/></g>
<g><circle cx="513.4" cy="766" r="2.15" fill="#920101"/></g>
<g><circle cx="559.9" cy="755.9" r="2.15" fill="#920101"/></g>
<circle cx="562.1" cy="769" r="2.6" fill="none" stroke="#e8e8e8" stroke-width=".7"/><path d="M560.8 769H563.4M562.1 767.7V770.3" stroke="#e8e8e8" stroke-width=".75"/>
<rect x="583" y="761.9" width="1.75" height="1.75" fill="#00a8f4"/><rect x="583" y="764.35" width="1.75" height="1.75" fill="#00a8f4"/><rect x="585.45" y="761.9" width="1.75" height="1.75" fill="#00a8f4"/><rect x="585.45" y="764.35" width="1.75" height="1.75" fill="#00a8f4"/>
<g><circle cx="653.1" cy="764" r="2.15" fill="#920101"/></g>
<g><circle cx="399.1" cy="772" r="1.7" fill="#0c0c0c" stroke="#1fe3af" stroke-width=".95"/><path d="M401.15 770.85L402.65 772L401.15 773.15Z" fill="#1fe3af"/></g>
<g><circle cx="486.6" cy="772" r="2.15" fill="#00a8f4"/><path d="M488.5 770.85L490.1 772L488.5 773.15Z" fill="#00a8f4"/></g>
<g><circle cx="669" cy="730.8" r="2.15" fill="#00a8f4"/><path d="M670.9 729.65L672.5 730.8L670.9 731.95Z" fill="#00a8f4"/></g>
<g><circle cx="758.4" cy="730.8" r="1.7" fill="#0c0c0c" stroke="#3bb21a" stroke-width=".95"/><path d="M760.45 729.65L761.95 730.8L760.45 731.95Z" fill="#3bb21a"/></g>
<g><circle cx="758.4" cy="742.8" r="1.7" fill="#0c0c0c" stroke="#3bb21a" stroke-width=".95"/><path d="M760.45 741.65L761.95 742.8L760.45 743.95Z" fill="#3bb21a"/></g>
<g><circle cx="758.4" cy="754.8" r="2.15" fill="#38d500"/><path d="M760.3 753.65L761.9 754.8L760.3 755.95Z" fill="#38d500"/></g>
<circle cx="759.5" cy="780.8" r="1.75" fill="#8f8590" fill-opacity=".85" stroke="#3bb21a" stroke-width=".9"/>
<circle cx="759.5" cy="791.9" r="1.75" fill="#8f8590" fill-opacity=".85" stroke="#3bb21a" stroke-width=".9"/>
<rect x="796.8" y="784.5" width="3.6" height="3.6" rx=".8" fill="#3a2a2a" fill-opacity=".5" stroke="#c03a3a" stroke-width=".9"/>
<rect x="838.8" y="725.3" width="1.75" height="1.75" fill="#ff7300"/><rect x="838.8" y="727.75" width="1.75" height="1.75" fill="#ff7300"/><rect x="841.25" y="725.3" width="1.75" height="1.75" fill="#ff7300"/><rect x="841.25" y="727.75" width="1.75" height="1.75" fill="#ff7300"/>
<path d="M842.9 727.4H849.7" stroke="#ff7300" stroke-width="2.4"/>
<rect x="907" y="719.8" width="1.75" height="1.75" fill="#ff7300"/><rect x="907" y="722.25" width="1.75" height="1.75" fill="#ff7300"/><rect x="909.45" y="719.8" width="1.75" height="1.75" fill="#ff7300"/><rect x="909.45" y="722.25" width="1.75" height="1.75" fill="#ff7300"/>
<g><circle cx="909.3" cy="732" r="2.15" fill="#1fe3af"/></g>
<g><circle cx="972.3" cy="703" r="1.7" fill="#0c0c0c" stroke="#fec71a" stroke-width=".95"/><path d="M974.35 701.85L975.85 703L974.35 704.15Z" fill="#fec71a"/></g>
<g><circle cx="972.3" cy="715" r="1.7" fill="#0c0c0c" stroke="#3bb21a" stroke-width=".95"/><path d="M974.35 713.85L975.85 715L974.35 716.15Z" fill="#3bb21a"/></g>
<g><circle cx="972.3" cy="727" r="1.7" fill="#0c0c0c" stroke="#3bb21a" stroke-width=".95"/><path d="M974.35 725.85L975.85 727L974.35 728.15Z" fill="#3bb21a"/></g>
<g><circle cx="972.3" cy="739" r="2.15" fill="#38d500"/><path d="M974.2 737.85L975.8 739L974.2 740.15Z" fill="#38d500"/></g>
<g><circle cx="972.3" cy="751" r="1.7" fill="#0c0c0c" stroke="#fec71a" stroke-width=".95"/><path d="M974.35 749.85L975.85 751L974.35 752.15Z" fill="#fec71a"/></g>
<circle cx="1005.6" cy="756.4" r="1.75" fill="#8f8590" fill-opacity=".85" stroke="#38d500" stroke-width=".9"/>
<circle cx="1005.6" cy="768.4" r="1.75" fill="#8f8590" fill-opacity=".85" stroke="#38d500" stroke-width=".9"/>
<circle cx="1054.5" cy="757.4" r="1.75" fill="#8f8590" fill-opacity=".85" stroke="#38d500" stroke-width=".9"/>
<path d="M1012.4 765.4v6.8" stroke="#9a9a9a" stroke-width=".4" stroke-dasharray=".6 1.2"/><path d="M1028.5 764.6v7.4" stroke="#dcdcdc" stroke-width=".75"/>
<circle cx="1055.2" cy="770.8" r="2.6" fill="none" stroke="#e8e8e8" stroke-width=".7"/><path d="M1053.9 770.8H1056.5M1055.2 769.5V772.1" stroke="#e8e8e8" stroke-width=".75"/>
<rect x="595.3" y="814.2" width="1.75" height="1.75" fill="#ff7300"/><rect x="595.3" y="816.65" width="1.75" height="1.75" fill="#ff7300"/><rect x="597.75" y="814.2" width="1.75" height="1.75" fill="#ff7300"/><rect x="597.75" y="816.65" width="1.75" height="1.75" fill="#ff7300"/>
<g><circle cx="597.6" cy="828.1" r="1.7" fill="#0c0c0c" stroke="#1fe3af" stroke-width=".95"/><path d="M599.65 826.95L601.15 828.1L599.65 829.25Z" fill="#1fe3af"/></g>
<g><circle cx="660.6" cy="799.4" r="1.7" fill="#0c0c0c" stroke="#fec71a" stroke-width=".95"/><path d="M662.65 798.25L664.15 799.4L662.65 800.55Z" fill="#fec71a"/></g>
<g><circle cx="660.6" cy="811.4" r="1.7" fill="#0c0c0c" stroke="#3bb21a" stroke-width=".95"/><path d="M662.65 810.25L664.15 811.4L662.65 812.55Z" fill="#3bb21a"/></g>
<g><circle cx="660.6" cy="823.4" r="1.7" fill="#0c0c0c" stroke="#3bb21a" stroke-width=".95"/><path d="M662.65 822.25L664.15 823.4L662.65 824.55Z" fill="#3bb21a"/></g>
<g><circle cx="660.6" cy="835.4" r="2.15" fill="#38d500"/><path d="M662.5 834.25L664.1 835.4L662.5 836.55Z" fill="#38d500"/></g>
<g><circle cx="660.6" cy="847.4" r="1.7" fill="#0c0c0c" stroke="#fec71a" stroke-width=".95"/><path d="M662.65 846.25L664.15 847.4L662.65 848.55Z" fill="#fec71a"/></g>
<rect x="574.6" y="815.4" width="1.75" height="1.75" fill="#ff7300"/><rect x="574.6" y="817.85" width="1.75" height="1.75" fill="#ff7300"/><rect x="577.05" y="815.4" width="1.75" height="1.75" fill="#ff7300"/><rect x="577.05" y="817.85" width="1.75" height="1.75" fill="#ff7300"/>
<path d="M578.7 817.5H585.5" stroke="#ff7300" stroke-width="2.4"/></svg>
<div id="wm">BLUEPRINT</div>
<div id="top"><div style="position:absolute;left:40.5px;top:0;width:3.5px;height:29.5px;background:rgba(255,255,255,.035)"></div>
<svg width="90" height="30" style="position:absolute;left:0;top:0"><path d="M11 8.6H20.6V4.2L30 11.2L20.6 18.2V13.8H11Z" fill="#6f6f6f"/>
<path d="M59 10V19M59.5 7L70.5 7M60 8L71 17" stroke="#c4c4c4" stroke-width="1.3" fill="none"/>
<rect x="54.2" y="2.4" width="9.6" height="8.2" rx="1.8" fill="#c6c6c6"/><rect x="70" y="4.9" width="6" height="4.4" rx="1.1" fill="#c6c6c6"/><rect x="55.4" y="16.8" width="6" height="4.6" rx="1.1" fill="#c6c6c6"/><rect x="68.8" y="15.4" width="6" height="4.6" rx="1.1" fill="#c6c6c6"/>
<path d="M363.7 5.8L370.5 12.1L363.7 18.4" stroke="#ececec" stroke-width="1.35" fill="none"/></svg>
<div class="bc" style="left:91px;top:-.8px;font-size:19.1px;letter-spacing:-.15px">BPA_TriggerManneGroupEvent</div><div class="bc" style="left:381px;top:-1.8px;font-size:18.8px;letter-spacing:-.31px">Event Graph</div></div>
</div></body></html>
